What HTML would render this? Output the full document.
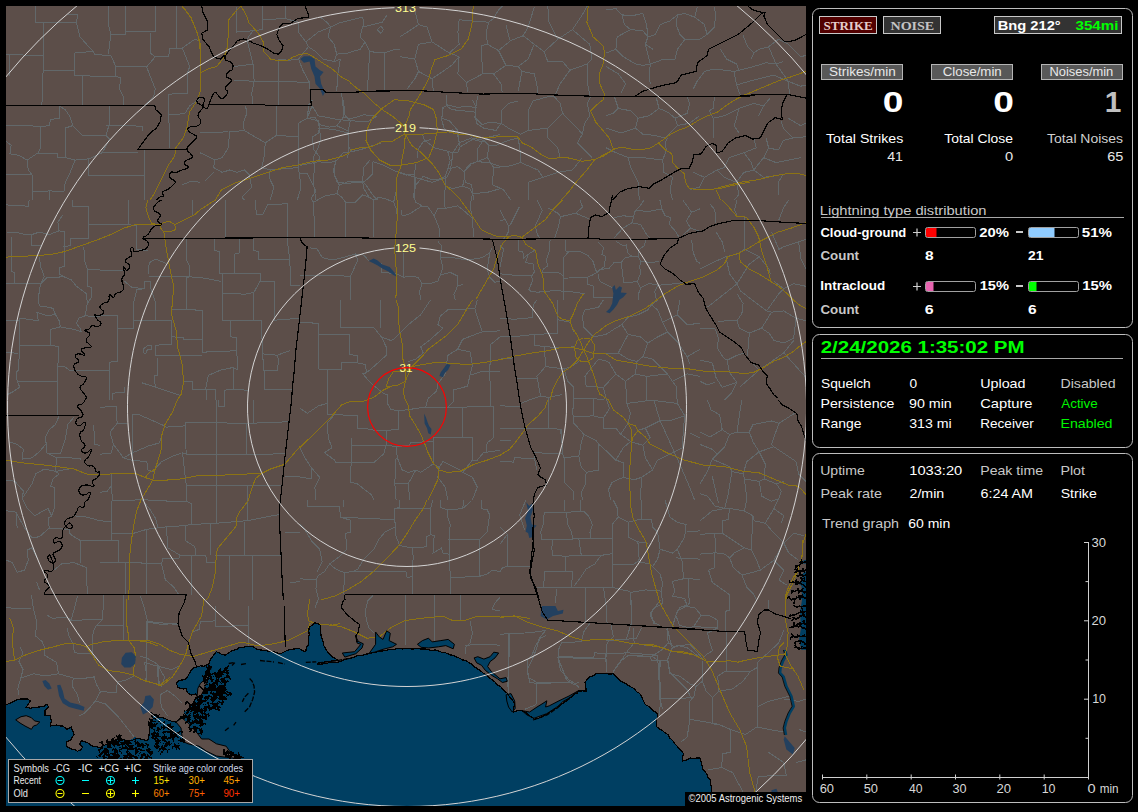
<!DOCTYPE html>
<html><head><meta charset="utf-8"><title>Lightning</title>
<style>html,body{margin:0;padding:0;background:#000;overflow:hidden}svg{display:block}</style></head>
<body><svg width="1138" height="812" viewBox="0 0 1138 812">
<rect width="1138" height="812" fill="#000"/>
<defs><clipPath id="mc"><rect x="6" y="6" width="800" height="800"/></clipPath></defs>
<g clip-path="url(#mc)">
<rect x="6" y="6" width="800" height="800" fill="#5c4e49"/>
<path d="M340.6 300.0L340.6 327.6L373.9 327.6L381.3 336.9L391.1 340.6L393.6 339.4L401.0 332.0L408.4 324.6L420.7 314.8L428.1 303.7L430.5 300.0M380.0 300.0L380.0 327.6M300.0 322.2L318.5 323.4L318.5 369.0L327.1 369.5L327.1 414.5L334.5 414.5L357.1 415.8L357.1 428.1L371.4 429.3L373.9 430.5L386.2 430.5M318.5 334.5L349.3 334.5L349.3 354.7L357.1 355.4L357.1 362.8L365.3 364.5L366.5 372.7L362.8 373.9L371.4 383.7L383.7 393.6L387.4 394.8L387.4 403.4L391.1 409.6L398.5 410.8L398.5 429.3L386.2 430.5L386.2 445.3L396.1 446.6L397.3 457.6L402.2 470.0L408.4 472.4L415.8 470.0L420.7 472.4L428.1 467.5L433.0 463.8M327.1 369.5L341.9 369.5L341.9 362.8L357.1 362.8M300.0 408.4L307.4 413.3L318.5 405.9L327.1 403.4M351.7 437.9L351.7 445.3L386.2 445.3M351.7 445.3L350.5 482.3L356.7 483.5L371.4 494.6L373.9 500.0M334.5 414.5L327.1 423.2L328.3 437.9L332.0 447.8L324.6 452.7L334.5 460.1L335.7 462.6L350.5 462.6M350.5 462.6L373.9 462.6L383.7 453.9L386.2 445.3M311.1 467.5L319.7 477.3L314.8 487.2L316.0 500.0M300.0 477.3L311.1 478.6L311.1 467.5L304.9 457.6L300.0 447.8M396.1 446.6L409.6 445.3L410.8 442.4L433.0 441.6L433.0 437.9L472.4 437.9L472.4 460.1L477.3 460.1L483.5 452.7L500.0 450.2M433.0 441.6L433.0 463.8L439.2 467.5L442.9 461.3L450.2 465.0L460.1 470.0L462.6 472.4L472.4 460.1M396.1 457.6L394.8 483.5L396.1 500.0M394.8 483.5L408.4 483.5L415.8 470.0M462.6 407.1L462.6 437.9M425.6 407.1L447.8 407.1L462.6 407.1L493.3 406.4L493.3 437.9L487.2 442.9L486.0 452.7M425.6 407.1L428.1 398.5L436.7 391.1L437.9 383.7L445.3 373.9L447.8 355.4L457.6 349.3L462.6 339.4L474.9 334.5L482.3 332.0L500.0 330.8M398.5 410.8L408.4 409.6L425.6 407.1M447.8 407.1L453.9 401.0L453.9 389.9L467.5 386.2L470.0 375.1L482.3 371.4L500.0 371.9M489.7 371.9L490.9 406.4M381.3 336.9L386.2 346.8L386.2 355.4L373.9 366.5L366.5 372.7M420.7 346.8L430.5 339.4L442.9 328.3L437.9 324.6L440.4 316.0L447.8 309.9L474.9 308.6L477.3 300.0M420.7 346.8L423.2 353.0L415.8 359.1L408.4 361.6M482.3 332.0L477.3 317.2L474.9 308.6M457.6 349.3L470.0 351.7L472.4 365.3L470.0 375.1M500.0 336.9L490.9 344.3L489.7 371.9M408.4 483.5L409.6 500.0M462.6 472.4L472.4 477.3L477.3 487.2L472.4 500.0M439.2 467.5L437.9 477.3L445.3 487.2L447.8 500.0M186.2 239.4L186.2 259.1L189.9 266.5L189.9 276.8L186.2 277.6L186.2 309.6L202.2 310.3L202.2 352.2L236.7 350.7L237.9 370.0L233.0 367.5L220.7 370.0L208.4 375.4L205.9 387.2L206.4 400.0M214.5 239.4L214.5 250.5L219.5 251.7L219.5 273.9L222.4 273.9M239.2 239.4L239.2 253.0L234.2 254.2L234.2 273.4M253.9 239.4L253.9 250.5L258.9 251.7L258.9 259.1L289.7 259.1L290.9 285.0L300.0 285.0M287.2 239.4L289.7 259.1M222.4 273.9L260.1 273.4L260.1 281.3L253.9 292.4L253.9 320.2M222.4 273.9L222.4 320.2L253.9 320.2L261.3 320.2L262.6 353.9L277.3 355.2L289.7 350.7M222.4 293.6L245.3 294.1L253.9 292.4M260.1 281.3L274.9 281.8L274.4 320.2L300.0 318.2M149.3 276.8L189.9 276.8L205.9 278.3L220.7 281.3M171.4 309.6L186.2 309.6M148.0 273.9L149.3 262.8L155.4 259.1L161.6 261.6L166.5 263.5M144.3 281.3L150.5 281.3L150.5 287.4L155.4 302.2L155.4 320.2L133.3 320.7L133.3 303.4L136.9 289.9L144.3 288.7L144.3 281.3M117.2 328.1L133.3 328.1L133.3 320.7M100.0 315.8L117.2 315.8L117.2 361.3L109.9 362.1L109.9 400.0M155.4 320.2L171.4 320.7L171.4 336.7L183.7 337.9L183.7 339.9L202.2 339.9M155.4 345.3L171.4 344.1L171.4 336.7M155.4 345.3L155.4 355.7L202.2 355.7M157.9 357.6L157.9 374.9L154.2 376.1L155.4 387.2M141.9 382.8L181.3 395.8M183.7 381.0L192.4 381.0L192.4 389.7L215.8 389.7L215.8 400.0M100.0 370.0L109.9 370.0M124.6 387.2L124.6 392.1L112.3 393.3L112.3 400.0M236.7 350.7L236.7 337.9L230.5 336.7L230.5 320.7M233.0 367.5L233.0 389.7L247.8 390.1M233.0 389.7L224.4 390.1L224.4 400.0M262.6 353.9L263.8 370.0L277.3 370.0L278.6 360.1L277.3 355.2M264.5 370.0L264.5 389.7L292.1 389.7M100.0 270.2L123.4 270.2M128.3 200.0L128.3 224.6L136.9 225.9L136.9 249.3L148.0 250.5M100.0 224.6L128.3 224.6M192.4 200.0L192.4 214.8M225.6 200.0L225.6 236.9M255.2 200.0L256.4 214.8L262.6 214.8L267.5 204.9L287.2 203.7L287.2 239.4M124.6 281.3L132.0 287.4L144.3 288.7M143.1 349.0L148.0 345.3L151.7 345.3L151.7 349.0L146.8 350.2L145.6 353.9L143.1 352.7L143.1 349.0M307.4 118.5L314.8 117.2L319.7 124.6L318.5 133.3L312.3 136.9L313.5 149.3L319.7 156.7L318.5 161.6M307.4 118.5L308.6 104.9L312.3 100.0M319.7 124.6L329.6 127.1L336.9 125.9L343.1 117.2L344.3 107.4L343.1 100.0M343.1 117.2L351.7 118.5L364.0 114.8L373.9 116.0M336.9 125.9L348.0 130.8L348.0 145.6L351.7 151.7L343.1 153.0L335.7 161.6L333.3 171.4L336.9 181.3L339.4 185.0L336.9 193.6L341.9 197.3L345.6 202.2L345.6 236.7M318.5 161.6L324.6 162.8L335.7 161.6M300.0 165.3L307.4 164.0L318.5 161.6M300.0 173.9L307.4 173.9L311.1 181.3L316.0 191.1L311.1 198.5L313.5 202.2L314.8 236.7M313.5 202.2L324.6 196.1L336.9 193.6M372.7 161.6L372.7 173.9L367.7 178.8L362.8 182.5L364.0 188.7L369.0 197.3L373.9 199.8L373.9 236.7M369.0 197.3L362.8 194.8L355.4 202.2L345.6 202.2M339.4 185.0L349.3 181.3L362.8 182.5M351.7 151.7L361.6 149.3L372.7 145.6L381.3 143.1M372.7 161.6L383.7 165.3L396.1 171.4L405.9 175.1L414.5 173.9L415.8 164.0M373.9 199.8L378.8 197.3L385.0 198.5L393.6 202.2L396.1 208.4L397.3 215.8M393.6 202.2L394.8 197.3L396.1 191.1M414.5 173.9L415.8 185.0L413.3 196.1L415.8 202.2L421.9 205.9L428.1 207.1L434.2 215.8L439.2 228.1L439.2 236.7M401.0 209.6L402.2 215.8L408.4 214.5L418.2 208.4L421.9 205.9M415.8 185.0L423.2 176.4L433.0 180.0L440.4 178.8L445.3 176.4M445.3 176.4L445.3 186.2L444.1 201.0L445.3 208.4L437.9 208.4L434.2 215.8M445.3 208.4L457.6 205.9L462.6 209.6L472.4 218.2L473.6 236.7M445.3 186.2L452.7 188.7L462.6 186.2L470.0 188.7L472.4 193.6L470.0 205.9L472.4 218.2M472.4 193.6L487.2 192.4L500.0 188.7M462.6 186.2L465.0 176.4L463.8 171.4L470.0 164.0L477.3 161.6L489.7 162.8L500.0 166.5M445.3 176.4L447.8 169.0L457.6 166.5L463.8 171.4M447.8 169.0L450.2 160.3L447.8 151.7L457.6 153.0L460.1 146.8L472.4 139.4L482.3 141.9M460.1 146.8L457.6 134.5L452.7 129.6L447.8 132.0M477.3 161.6L477.3 149.3L482.3 141.9L489.7 136.9L500.0 134.5M472.4 100.0L476.1 107.4L474.9 117.2L482.3 124.6L489.7 122.2L500.0 123.4M442.9 107.4L447.8 104.9L457.6 107.4L467.5 106.2L474.9 107.4M442.9 107.4L441.6 119.7L444.1 128.3L447.8 132.0M417.0 157.9L418.2 149.3L423.2 141.9L430.5 139.4M309.9 247.8L317.2 249.0L322.2 257.6L332.0 260.1L343.1 257.6L355.4 253.9L364.0 255.2L369.0 261.3M355.4 253.9L357.9 260.1L350.5 276.1L350.5 300.0M300.0 275.4L350.5 276.1M381.3 262.6L381.3 272.4L396.1 273.6L403.4 277.3L410.8 276.1L418.2 277.3L421.9 283.5L430.5 283.5L437.9 281.0L440.4 274.9L450.2 272.4L457.6 276.1L457.6 286.0L462.6 284.7M403.4 252.7L403.4 277.3M421.9 283.5L419.5 292.1L420.7 300.0M437.9 241.6L441.6 245.3L440.4 257.6L442.9 267.5L440.4 274.9M440.4 257.6L452.7 257.6L467.5 260.1L482.3 257.6L489.7 252.7L492.1 247.8M457.6 286.0L453.9 294.6L455.2 300.0M489.7 252.7L487.2 270.0L489.7 277.3L494.6 282.3L500.0 281.0M500.0 318.5L514.8 319.2L532.0 317.7L533.3 304.9L536.9 300.0M500.0 336.9L514.8 336.5L534.5 334.5L534.5 345.6L544.3 346.3L545.6 366.5L536.9 376.4L540.6 396.1L529.6 399.8L520.9 403.4M500.0 359.1L513.5 357.9M517.2 378.3L536.9 378.8M500.0 405.9L520.9 406.4M500.0 428.1L524.6 428.1L548.0 428.1L560.3 429.3L561.6 437.9M548.0 397.3L548.0 428.1M540.6 396.1L548.0 397.3L561.6 394.8M500.0 440.4L511.1 440.9M500.0 461.3L513.5 462.1L514.8 457.6L534.5 458.9L534.5 452.7L562.8 453.9L564.0 457.6L578.8 456.4L581.3 467.5L586.2 472.4L598.5 470.0M534.5 458.9L536.9 470.0M562.8 453.9L561.6 437.9L561.6 429.3M564.0 457.6L564.5 482.3L573.9 492.1L573.9 500.0M557.9 300.0L557.9 319.7L570.2 322.2L573.9 332.0M534.5 334.5L557.9 333.3L557.9 319.7M544.3 346.3L559.1 348.0L573.9 346.8M545.6 366.5L564.0 369.0L571.4 366.5L578.8 361.6M564.0 369.0L567.7 381.3L573.9 387.4L573.9 398.5L572.7 412.1L573.9 423.2L583.7 434.2L596.1 440.4L598.5 444.1L598.5 470.0M573.9 398.5L593.6 398.5L603.4 399.8L605.9 397.3M593.6 398.5L593.1 415.8L573.9 417.0M593.1 415.8L603.4 418.2L603.4 428.1L615.8 428.1L620.7 434.2L630.5 441.6M583.7 434.2L581.3 442.9L578.8 456.4M605.9 397.3L609.6 408.4L603.4 418.2M586.2 386.2L585.0 376.4L588.7 371.4L598.5 359.1L608.4 361.6M586.2 386.2L603.4 387.4L605.9 397.3M603.4 387.4L615.8 373.9L608.4 361.6M615.8 373.9L625.6 381.3L626.8 403.4L645.3 401.0L653.9 400.5M626.8 403.4L630.5 413.3L628.1 423.2L620.7 434.2M653.9 400.5L660.1 420.7L645.3 428.1L637.9 430.5M653.9 400.5L677.3 403.4L684.7 415.8L670.0 420.7L660.1 420.7M646.6 376.4L646.6 400.5M625.6 381.3L635.5 373.9L646.6 376.4L667.5 373.9L672.4 381.3L676.1 386.2L677.3 403.4M635.5 373.9L636.7 361.6L628.1 359.1L618.2 353.0L605.9 353.0M618.2 353.0L628.1 334.5L621.9 324.6L613.3 329.6L605.9 334.5L593.6 336.9M628.1 334.5L640.4 336.9L647.8 343.1L642.9 356.7L636.7 361.6M647.8 343.1L657.6 336.9L667.5 332.0L662.6 322.2L657.6 309.9L651.5 304.9M621.9 324.6L628.1 317.2L637.9 314.8L647.8 309.9L651.5 304.9L657.6 300.0M667.5 332.0L677.3 341.9L687.2 356.7L689.7 364.0M642.9 356.7L652.7 359.1L667.5 373.9M672.4 381.3L687.2 373.9L700.0 376.4M687.2 356.7L700.0 349.3M677.3 314.8L687.2 324.6L700.0 323.4M679.8 300.0L677.3 314.8L662.6 322.2M582.5 316.0L585.0 309.9L598.5 307.4L603.4 300.0M582.5 316.0L583.7 327.1L593.6 336.9M598.5 444.1L608.4 452.7L615.8 460.1L623.2 462.6L623.2 477.3L612.1 482.3L608.4 489.7L610.8 500.0M630.5 441.6L623.2 447.8L615.8 460.1M630.5 441.6L642.9 445.3L645.3 457.6L652.7 470.0L657.6 460.1L670.0 453.9L682.3 447.8M645.3 428.1L650.2 437.9L642.9 445.3M660.1 420.7L672.4 447.8L682.3 470.0L689.7 487.2L694.6 500.0M652.7 470.0L641.6 477.3L640.4 500.0M623.2 477.3L634.2 479.8L641.6 477.3M586.2 472.4L585.0 484.7L581.3 492.1L582.5 500.0M682.3 447.8L683.5 428.1L684.7 415.8M689.7 433.0L700.0 437.9M307.4 500.0L307.4 506.2L339.4 506.9L340.6 517.2L350.5 520.2L350.5 532.0L345.6 533.3L346.8 549.3L339.4 556.7L329.6 564.0L324.6 571.4L317.2 576.4L316.0 588.7L318.5 598.5L314.8 608.4M340.6 517.2L394.8 519.7L394.8 508.6L399.8 507.4L399.8 500.0M343.1 500.0L343.1 506.9M394.8 508.6L430.5 508.6L433.0 500.0M430.5 508.6L430.5 534.5L426.8 536.9L426.8 546.8L412.1 548.0L413.3 556.7L412.1 571.4L412.1 594.3M394.8 519.7L396.1 536.9L399.8 545.6L412.1 548.0M394.8 527.1L385.0 532.0L378.8 539.4L373.9 549.3L364.0 559.1L357.9 569.0L353.0 571.4M344.3 572.7L353.0 571.4L405.9 571.4L407.1 577.6L412.1 576.4M344.3 572.7L343.8 594.3M329.6 564.0L335.7 569.0L344.3 572.7M300.0 578.8L316.0 580.0M300.0 524.6L304.9 529.6L312.3 541.9L319.7 549.3L322.2 561.6L317.2 571.4M447.8 509.9L447.8 517.2L450.2 524.6L449.0 539.4L450.2 576.4L450.2 594.3M449.0 539.4L479.8 539.4L487.2 532.0L489.7 514.8L487.2 509.9L481.0 508.6L481.0 500.0M430.5 534.5L434.2 535.7L433.0 553.0L441.6 548.0L442.9 553.0L449.0 554.2M479.8 539.4L479.3 576.4L450.2 577.6M479.3 576.4L487.2 573.9L492.1 570.2L500.0 571.4M440.4 500.0L440.4 507.4L447.8 509.9L462.6 508.6L463.8 500.0M462.6 508.6L471.2 501.2M405.4 594.3L405.4 645.3M434.2 594.3L434.2 644.1M460.6 594.3L460.6 619.5M500.0 597.3L494.6 603.4L492.1 609.6L500.0 610.8M373.9 594.3L367.7 601.0L365.3 610.8L366.5 620.7L369.0 628.1L373.9 633.0M470.0 620.7L472.4 633.0L470.0 642.9L465.0 647.8L465.0 653.9M465.0 645.3L487.2 644.1L500.0 645.3M185.0 422.2L247.8 423.4L289.7 421.7M185.0 422.2L186.2 454.2L216.3 454.7L246.6 454.7L284.7 453.7M216.3 400.0L216.3 454.7L216.3 485.0L216.3 523.2M246.6 423.4L247.0 454.7L247.0 485.0L247.0 520.7M186.2 485.0L216.3 485.0L247.0 485.0L282.3 485.0M186.2 454.2L182.5 453.0L186.2 485.0L186.2 501.0L191.1 503.4L191.6 524.4M112.3 500.5L144.3 499.8L166.5 501.0L186.2 501.0M111.1 533.0L134.5 533.0L146.8 529.3L166.5 526.8L185.0 525.6L191.6 524.4L210.8 523.6L216.3 523.2L247.0 520.7L272.4 515.8L279.8 514.5M111.1 500.5L111.1 533.0L111.1 540.4L118.5 540.4L118.5 562.6M100.0 540.4L111.1 540.4M100.0 562.6L118.5 562.6L146.8 563.1L161.6 563.8L162.8 558.9L178.8 558.9L180.0 555.2L205.9 555.2L206.4 562.6L214.5 562.6M146.8 529.3L146.8 563.1L146.8 594.6M166.5 526.8L167.7 547.8L180.0 555.2M185.0 525.6L185.0 540.4L194.8 546.6L196.1 555.2M210.8 523.6L210.3 555.2M244.1 521.9L244.1 555.2M214.5 555.2L244.1 555.2L281.0 555.2M191.6 555.2L191.6 594.6M229.3 555.2L229.3 600.0M252.7 555.2L252.7 600.0M125.9 563.1L125.9 594.6M161.6 563.8L165.3 579.8L173.9 587.2L178.8 594.6M141.9 499.8L149.3 508.4L155.4 518.2L157.9 526.8M100.0 407.4L116.0 406.2L117.2 423.4L127.1 423.4M117.2 423.4L109.9 432.0L113.5 444.3L111.1 453.0L100.0 454.2M113.5 444.3L123.4 457.9L132.0 460.3L146.8 461.6L148.0 470.2L153.0 471.4M132.0 460.3L132.0 414.8L139.4 414.8L161.6 424.6L166.5 427.1L185.0 425.9M123.4 457.9L132.0 453.0L149.3 445.6L159.1 443.1L161.6 436.9M153.0 471.4L161.6 461.6L171.4 456.7L181.3 453.0M100.0 520.7L111.1 521.9M111.1 473.9L112.3 500.5M100.0 492.4L107.4 491.1L111.1 486.2M284.7 533.0L300.0 532.5M284.7 476.8L300.0 476.8M289.7 582.3L300.0 581.8M218.2 400.0L218.2 406.2L224.4 406.2L224.4 400.0M253.9 400.0L253.9 423.4M35.7 6.2L35.7 22.2L76.4 22.7L77.6 14.8L67.7 14.8M43.1 22.7L43.1 70.2L41.9 105.4M6.2 54.7L43.1 55.4M9.9 54.7L9.9 76.4M43.1 70.2L74.6 70.2M74.6 52.5L74.6 75.1L82.5 75.9L82.5 105.4M74.6 52.5L93.6 51.7L94.8 54.7L110.8 55.4L115.8 66.5L115.8 76.4L82.5 75.9M76.4 22.7L80.0 36.9L89.9 48.0L93.6 51.7M108.4 6.2L108.4 24.6L110.8 34.5L108.4 54.2M110.8 34.5L125.6 34.5L125.6 6.2M125.6 31.5L155.2 32.0L155.2 6.2M115.8 66.5L146.6 67.0L155.2 56.7L150.2 53.0L150.2 33.3M115.8 76.4L120.7 77.6L119.5 88.7L123.2 96.1L123.2 105.4M146.6 67.0L155.2 88.7L153.9 96.1L145.3 105.4M155.2 56.7L168.7 56.2L170.0 48.0L182.3 48.0L189.7 66.5L187.2 73.9L187.2 93.6L168.7 94.1L168.7 114.5L170.0 147.8M176.1 6.2L176.1 48.0M182.3 48.0L194.6 39.4L200.0 40.6M168.7 114.5L184.7 113.8L189.7 105.9L200.0 98.5M59.1 105.9L59.1 118.2L50.5 119.5L49.3 125.6L40.6 126.8L40.6 147.8L38.2 152.7L27.1 160.1L28.3 170.0L32.0 174.9L32.0 192.1L49.3 190.9L64.0 191.6L65.3 182.3L70.2 172.4L75.1 160.1M6.2 125.6L24.6 125.1L40.6 126.8M59.1 105.9L65.3 109.6L70.2 117.0L72.7 125.6L82.5 135.5L105.9 135.5L109.6 123.2L109.6 105.9M65.3 128.1L65.3 157.6L57.9 157.6L57.9 153.9L38.2 153.9M65.3 157.6L75.1 160.1L88.7 158.9L102.2 152.7L137.9 152.2M105.9 135.5L109.6 139.2L102.2 152.7M105.9 125.6L142.9 126.1L142.9 130.5M72.7 125.6L65.3 128.1M144.1 150.2L144.1 175.4L144.1 200.0M88.7 158.9L88.7 175.4L144.1 175.4M6.2 141.6L11.1 145.3L9.9 153.9L18.5 155.2L27.1 160.1M6.2 174.4L32.0 174.9M32.0 192.1L32.0 200.0M49.3 190.9L49.3 200.0M182.3 184.7L192.1 181.0L200.0 182.3M262.8 6.2L262.8 19.7L285.0 18.5L285.0 6.2M236.9 7.4L236.9 32.0L253.0 30.8L262.8 29.6L262.8 19.7M253.0 30.8L246.8 39.4L253.0 64.0L234.5 66.5L232.0 65.3M253.0 64.0L254.2 81.3L233.3 80.0M254.2 81.3L251.7 93.6L253.0 104.7M278.8 59.1L278.8 81.3L278.8 104.7M254.2 81.3L278.8 81.3L309.6 82.5L309.6 88.7M285.0 18.5L298.5 22.2L298.5 32.0L305.9 41.9L308.4 46.8L298.5 59.1L303.4 71.4L309.6 82.5M278.8 59.1L288.7 60.3L298.5 59.1M308.4 46.8L315.8 51.7L323.2 59.1L334.2 61.6L340.4 59.1M305.9 41.9L318.2 32.0L330.5 27.1L337.9 23.4L362.6 17.2M330.5 27.1L328.1 36.9L334.2 44.3L336.7 54.2L334.2 61.6M340.4 59.1L337.9 73.9L336.7 91.1M336.7 54.2L347.8 53.0L360.1 49.3L365.0 41.9L360.1 36.9L362.6 27.1L372.4 24.6L382.3 22.2L387.2 14.8M362.6 17.2L363.8 23.4L362.6 27.1M320.7 17.2L328.1 23.4L330.5 27.1M365.0 41.9L370.0 51.7L368.7 66.5L367.5 91.1M370.0 51.7L384.7 53.0L394.6 49.3L400.0 49.3M384.7 53.0L384.2 91.1M377.3 29.6L381.0 25.9L383.5 29.6L381.0 33.3L377.3 29.6M245.6 105.9L246.8 113.3L243.1 123.2L244.3 130.5L229.6 131.8L228.3 147.8L222.2 157.6L214.8 160.1L213.5 167.5L222.2 172.4L229.6 170.0L236.9 172.4L244.3 170.0L249.3 174.9M244.3 130.5L265.3 142.9L264.0 157.6L261.6 167.5L270.2 170.0L269.0 177.3L273.9 187.2L270.2 200.0M276.4 105.9L276.4 135.5L265.3 142.9M276.4 135.5L298.5 136.7L298.5 123.2L307.1 118.2L312.1 105.9M307.1 118.2L318.2 120.7L320.7 137.9L318.2 147.8L313.3 157.6L314.5 167.5L313.3 182.3L315.8 200.0M298.5 136.7L298.5 167.5L270.2 170.0M298.5 167.5L301.0 187.2L297.3 200.0M312.1 105.9L318.2 115.8L337.9 119.5L350.2 120.7M341.6 92.4L342.9 105.9L345.3 115.8L350.2 120.7L347.8 133.0L349.0 145.3L347.8 157.6M318.2 128.1L333.0 129.3L347.8 133.0M350.2 120.7L367.5 121.9L377.3 115.8M335.5 160.1L334.2 174.9L337.9 182.3L347.8 183.5L362.6 181.0L367.5 187.2L372.4 194.6L377.3 200.0M200.0 133.0L228.3 131.8M200.0 152.7L209.9 157.6L214.8 160.1M249.3 174.9L251.7 187.2L241.9 197.0L244.3 200.0M204.9 181.0L213.5 172.4M362.6 181.0L363.8 167.5L370.0 160.1M414.8 9.9L418.5 24.6L427.1 27.1L432.0 41.9L449.3 53.0L459.1 56.7M418.5 24.6L407.4 32.0L400.0 36.9M400.0 56.7L414.8 59.1L418.5 71.4L414.8 78.8L407.4 88.7M432.0 41.9L418.5 44.3L414.8 59.1M459.1 19.7L457.9 32.0L459.1 44.3L449.3 53.0M459.1 19.7L471.4 20.9L488.7 22.2L486.2 32.0L487.4 44.3L481.3 45.6L482.5 73.9L466.5 82.5M487.4 44.3L498.5 50.5L505.9 65.3L518.2 66.5L521.9 71.4L518.2 91.1M488.7 22.2L493.6 18.5L498.5 9.9L502.2 6.2M498.5 50.5L510.8 40.6L523.2 35.7L534.2 44.3L528.1 59.1L518.2 66.5M505.9 24.6L509.6 39.4L510.8 40.6M534.2 44.3L544.1 51.7L547.8 61.6L562.6 61.6L570.0 70.2L560.1 83.7L555.2 94.8M521.9 71.4L534.2 73.9L536.7 83.7L537.9 93.6M493.6 73.9L501.0 83.7L502.2 92.4M482.5 73.9L493.6 73.9L505.9 65.3M459.1 56.7L457.9 73.9L466.5 82.5L467.7 92.4M418.5 71.4L432.0 78.8L433.3 91.1M432.0 78.8L451.7 65.3L459.1 56.7M544.1 51.7L557.6 39.4L572.4 29.6L582.3 14.8L587.2 6.2M572.4 29.6L589.7 44.3L592.1 59.1L587.2 64.0L587.2 81.3L589.7 94.8M547.8 6.2L549.0 22.2L557.6 39.4M570.0 70.2L587.2 64.0M523.2 35.7L528.1 27.1L534.2 7.4M446.8 94.8L446.8 105.9L451.7 109.6L475.1 112.1L477.6 96.1M475.1 112.1L476.4 123.2L483.7 128.1L496.1 130.5L501.0 123.2L501.0 110.8L508.4 103.4L518.2 101.0M501.0 123.2L508.4 128.1L520.7 134.2L528.1 130.5L528.1 110.8L533.0 101.0L545.3 97.3L553.9 96.1M528.1 130.5L547.8 128.1L557.6 118.2L562.6 113.3L560.1 103.4L553.9 96.1M562.6 113.3L577.3 128.1L582.3 134.2L584.7 123.2L589.7 115.8L587.2 103.4L590.9 96.1M443.1 108.4L441.9 118.2L449.3 120.7L457.9 130.5L459.1 142.9L453.0 152.7L450.5 170.0L446.8 177.3M459.1 142.9L471.4 137.9L483.7 140.4L488.7 145.3L496.1 145.3L508.4 140.4L518.2 137.9M488.7 145.3L487.4 157.6L471.4 163.8L464.0 172.4L465.3 182.3L471.4 184.7L473.9 200.0M487.4 157.6L493.6 167.5L508.4 166.3L520.7 162.6L520.7 155.2L518.2 137.9M493.6 167.5L492.4 184.7L503.4 189.7L510.8 200.0M520.7 162.6L537.9 170.0L542.9 177.3L528.1 182.3L528.1 200.0M542.9 177.3L557.6 172.4L572.4 170.0L582.3 157.6M582.3 134.2L577.3 142.9L587.2 152.7L592.1 157.6M453.0 152.7L434.5 147.8L424.6 140.4L422.2 134.2M414.8 177.3L432.0 182.3L446.8 177.3M400.0 172.4L414.8 177.3L414.8 200.0M547.8 128.1L547.8 137.9L557.6 147.8L560.1 157.6M606.0 9.9L615.9 8.6L622.0 14.8L630.6 16.0L642.9 13.5M622.0 14.8L624.5 24.6L630.6 29.6L617.1 36.9L615.9 49.3L623.2 56.7M630.6 29.6L642.9 30.8L647.9 36.9L645.4 44.3L652.8 49.3M642.9 13.5L646.6 24.6L647.9 36.9M660.2 24.6L670.0 20.9L677.4 14.8L684.8 13.5L694.7 17.2L704.5 24.6L707.0 34.5M677.4 14.8L676.2 24.6L679.9 34.5L684.8 39.4L677.4 49.3L675.0 59.1M660.2 24.6L655.3 34.5L647.9 36.9M645.4 44.3L650.3 64.0L649.1 76.4L650.3 83.7M675.0 59.1L663.9 59.1L650.3 64.0M623.2 56.7L635.6 64.0L642.9 65.3L650.3 64.0M606.0 66.5L618.3 73.9L625.7 83.7L620.8 93.6M615.9 49.3L606.0 53.0M684.8 39.4L699.6 39.4L707.0 34.5L714.4 27.1L715.6 14.8L714.4 7.4M694.7 17.2L697.1 7.4M720.5 49.3L726.7 59.1L736.5 64.0L739.0 70.2L734.1 71.4L736.5 85.0L740.2 94.8M739.0 70.2L753.8 66.5L766.1 62.8L776.0 64.0L783.3 61.6M742.7 34.5L747.6 46.8L753.8 53.0L758.7 49.3L768.6 46.8L776.0 64.0L788.3 81.3L789.5 93.6M753.8 53.0L751.3 59.1M768.6 46.8L778.4 39.4L788.3 44.3L800.6 56.7L806.0 55.4M736.5 85.0L753.8 80.0L773.5 75.1L788.3 81.3M704.5 71.4L714.4 69.0L734.1 71.4M704.5 71.4L697.1 81.3L693.4 88.7M788.3 81.3L800.6 86.2L806.0 85.0M614.6 97.3L618.3 108.4L613.4 113.3L606.0 115.8M618.3 108.4L630.6 110.8L638.0 118.2L649.1 115.8L659.0 108.4L656.5 98.5M638.0 118.2L635.6 128.1L620.8 133.0L613.4 130.5L606.0 128.1M635.6 128.1L642.9 134.2L655.3 135.5L665.1 137.9L670.0 133.0L677.4 125.6M659.0 108.4L667.6 112.1L675.0 118.2L677.4 125.6L689.7 123.2L699.6 115.8M687.3 97.3L689.7 103.4L687.3 113.3L675.0 118.2M714.4 97.3L713.1 108.4L709.4 110.8L713.1 118.2L713.1 137.9M713.1 118.2L724.2 115.8L734.1 110.8L739.0 108.4M739.0 108.4L736.5 118.2L734.1 125.6L739.0 133.0M739.0 108.4L753.8 103.4L763.6 105.9L769.8 98.5M758.7 115.8L763.6 105.9M606.0 147.8L615.9 152.7L628.2 157.6L630.6 167.5L638.0 182.3L639.3 200.0M628.2 157.6L642.9 157.6L662.7 160.1L666.3 150.2M666.3 150.2L665.1 142.9L667.6 137.9M662.7 160.1L663.9 172.4L672.5 177.3L670.0 189.7L672.5 200.0M693.4 172.4L704.5 177.3L716.8 170.0L724.2 167.5L729.2 157.6M716.8 170.0L724.2 177.3L736.5 182.3L743.9 172.4L753.8 170.0L763.6 157.6L768.6 147.8L778.4 150.2M729.2 157.6L743.9 152.7L756.2 147.8L753.8 137.9M743.9 152.7L751.3 162.6L753.8 170.0M763.6 157.6L776.0 162.6L788.3 160.1L800.6 157.6M778.4 150.2L783.3 140.4L793.2 137.9L806.0 136.7M768.6 147.8L766.1 137.9M736.5 182.3L739.0 194.6L734.1 200.0M753.8 170.0L763.6 177.3L773.5 176.1M778.4 194.6L778.4 182.3L783.3 173.6M704.5 177.3L699.6 187.2L689.7 189.7M793.2 137.9L783.3 128.1L780.9 120.7M788.3 118.2L800.6 125.6L806.0 123.2M6.2 204.9L28.3 206.2L29.1 200.0M72.7 200.0L72.7 206.2L88.2 206.9L88.2 224.6L100.0 224.6M88.2 224.6L88.2 238.2L70.2 238.9L70.2 245.6L64.0 246.8L64.5 232.0L59.1 230.8L57.9 222.2L62.8 214.8M7.4 232.0L14.8 232.0L24.6 234.5L32.0 234.5L39.4 232.0L49.3 234.5L59.1 230.8M11.1 236.9L11.1 271.4L14.8 272.7L14.8 283.3M32.0 234.5L31.5 245.6L40.6 245.6M6.2 283.3L14.8 283.3L40.6 283.7L46.8 277.6L64.0 276.8L71.4 280.0L76.4 286.2L86.2 293.6L87.4 303.4L85.0 315.8L78.8 318.2L76.4 323.2L80.0 328.1L81.3 331.8M39.4 256.7L40.6 266.5L44.3 276.4L40.6 283.7L38.2 298.5L39.4 305.9L48.0 307.1L53.0 308.4L55.4 314.5L59.1 320.7L60.3 326.8L66.5 328.1L73.9 329.3L81.3 331.8M64.5 246.8L64.5 266.5L59.1 267.7L59.1 273.9L64.0 276.8M83.7 246.8L85.0 261.6L87.4 269.0L100.0 269.0M87.4 269.0L87.4 286.2L91.1 287.4L91.6 297.3L87.4 303.4M36.9 312.1L38.2 320.7L19.7 318.2L19.7 345.3L50.5 345.3L50.5 329.3L60.3 326.8M6.2 320.7L19.7 320.2M50.5 345.3L58.6 346.6L57.9 366.3L57.9 400.0M19.7 345.3L18.5 370.0L16.0 372.4L17.2 381.0L57.9 381.8M57.9 366.3L65.3 367.0L69.0 370.0L100.0 370.0M6.2 352.7L18.5 353.2M17.2 381.0L19.7 387.2L12.3 392.1L7.4 394.6M36.9 312.1L46.8 315.8L55.4 314.5M85.0 315.8L100.0 317.0M57.9 400.0L57.9 414.8M59.1 416.0L55.4 424.6L49.3 429.6L45.6 436.9L46.8 453.0L60.3 453.7L65.3 439.4L67.7 424.6L73.9 417.2M9.9 441.9L17.2 444.3L23.4 449.3L22.2 459.1L32.0 457.9L39.4 451.7L45.6 444.3M46.8 453.0L56.7 457.9L55.4 471.4L59.1 473.9L53.0 478.8L50.5 486.2L54.2 487.4L54.2 508.4L51.7 515.8L48.0 508.4L45.6 509.6M55.4 471.4L44.3 469.0L35.7 473.9L32.0 483.7L27.1 491.1L22.2 498.5L27.1 508.4L34.5 515.8L45.6 509.6M6.2 480.0L14.8 481.3L23.4 491.1L22.2 498.5M6.2 510.8L16.0 512.1L24.6 528.1L32.0 537.9L39.4 536.7L49.3 528.1L48.0 518.2L51.7 515.8M16.0 512.1L17.2 528.1M49.3 528.1L69.0 529.3L70.2 534.2L80.0 540.4L100.0 540.9M80.0 540.4L80.0 562.6M6.2 560.1L12.3 562.6L17.2 572.4L24.6 570.0L28.3 560.1L27.1 550.2L32.0 547.8L36.9 557.6M54.2 570.0L61.6 563.8L73.9 562.6L86.2 567.5L87.4 594.6M36.9 582.3L39.4 589.7M93.6 424.6L94.8 444.3L100.0 445.6M73.9 515.8L86.2 517.0L100.0 520.7M56.7 457.9L71.4 457.9L81.3 459.1M55.4 471.4L69.0 469.0M500.0 210.5L508.8 226.4L507.9 233.4L503.5 239.0M519.3 207.0L510.5 224.6L508.8 226.4M536.9 200.0L542.2 210.5L535.1 226.4L537.8 235.1L540.4 239.0M547.5 207.9L558.0 213.2L560.6 216.7L558.0 228.1L554.5 239.0M560.6 216.7L575.6 213.2L582.6 207.0L580.0 200.0M575.6 213.2L586.1 217.6L589.6 219.3M518.5 240.1L518.5 251.0L522.8 251.8L523.7 258.0L528.1 254.5L533.4 251.0L536.0 250.1M528.1 254.5L525.5 262.4L533.4 264.1L534.3 272.1L531.6 275.6L532.5 280.8L529.0 289.6L530.8 291.4L537.8 292.3L543.1 291.4M500.0 273.8L514.1 275.2L532.5 275.9M550.1 240.1L549.2 251.0L546.6 259.8L547.5 265.9L543.1 269.4L542.2 272.9L558.0 272.4L563.3 275.6M565.0 240.1L565.9 251.0L568.5 251.8L563.3 258.0L563.6 277.3L563.6 291.4L563.3 300.0M568.5 251.8L580.8 251.8L587.9 255.4L593.1 261.5L595.8 270.3L597.5 272.1L591.4 275.6L587.0 277.3L563.6 278.2M587.0 277.3L587.9 284.4L593.1 286.1L594.0 297.5L612.5 297.5M597.5 272.1L600.2 269.4L609.0 268.5L614.2 262.4L621.3 262.4L624.8 258.0L631.8 256.2L638.8 257.1L640.6 261.5M621.3 262.4L622.1 270.3L623.0 277.3L623.9 282.6L637.1 281.7L640.6 273.8L639.7 266.8L640.6 261.5M598.4 273.8L599.3 280.8L605.4 284.4L612.5 287.9M598.4 242.2L603.7 247.5L601.9 254.5L605.4 256.2L604.6 266.8L600.2 269.4M616.0 241.3L623.0 245.7L626.5 244.8L627.4 252.7L631.8 256.2M645.9 240.4L644.1 245.7L638.8 250.1L638.8 257.1M640.6 261.5L651.1 262.4L659.1 261.5M637.1 281.7L640.6 287.9L638.8 293.1L638.8 300.0M640.6 287.9L649.4 283.5L658.2 285.2L668.7 284.4L682.8 282.6M658.2 285.2L654.7 291.4L656.4 300.0M500.0 245.7L503.5 249.2L501.8 258.0L500.0 266.8M543.1 291.4L558.0 290.5L563.6 291.4L577.3 292.3L584.4 294.0M614.2 217.6L623.0 215.8L633.6 216.7L635.3 210.5L640.6 205.3L644.1 200.0M633.6 216.7L631.8 222.8L623.0 228.1L614.2 237.8M631.8 222.8L640.6 224.6L645.9 233.4L649.4 237.8M635.3 210.5L649.4 211.4L661.7 208.8L659.9 200.0M661.7 208.8L665.2 215.8L670.5 217.6L669.6 224.6L675.7 231.6L679.3 237.8M682.8 200.0L691.6 212.3L686.3 221.1L690.7 228.1L682.8 235.1M691.6 212.3L700.0 208.8M690.7 228.1L700.0 231.6M691.6 240.4L693.3 252.7L696.8 261.5L700.0 263.3M500.0 221.1L505.3 219.3M709.9 203.7L714.8 209.9L716.0 223.4M744.4 217.3L744.4 249.3L737.0 254.2M778.9 219.7L783.8 207.4L788.7 200.0M737.0 200.0L734.5 209.9L737.0 214.8M716.0 232.0L722.2 241.9L724.6 251.8M700.0 269.0L714.8 261.6L725.9 256.7L737.0 254.2M725.9 256.7L729.6 273.9L737.0 283.8L724.6 293.7L707.4 307.2M737.0 283.8L749.3 264.1L759.2 256.7L744.4 249.3M759.2 256.7L769.0 269.0L770.2 273.9M737.0 283.8L740.7 291.2L766.6 310.9L771.5 312.2L783.8 310.9L796.1 318.3L806.0 320.8M766.6 310.9L778.9 293.7L783.8 288.7L773.9 281.3M783.8 288.7L793.7 283.8L806.0 286.3M771.5 312.2L761.6 328.2L749.3 333.1L748.1 347.9L746.8 357.8L759.2 370.1M761.6 328.2L769.0 333.1L773.9 340.5L783.8 343.0L793.7 338.0L796.1 318.3M737.0 293.7L743.1 303.5L741.9 313.4L737.0 320.8L739.4 328.2L749.3 333.1M737.0 320.8L724.6 320.8L718.5 322.0M771.5 232.0L778.9 249.3L783.8 246.8L798.6 241.9L806.0 239.4M798.6 241.9L801.1 259.2L806.0 269.0M700.0 328.2L714.8 328.2L718.5 338.0L717.3 347.9L723.4 357.8L727.1 360.2L737.0 355.3L744.4 352.8M727.1 360.2L729.6 372.5L737.0 382.4L732.0 392.3L724.6 400.1M712.3 362.7L716.0 377.5L722.2 387.3L737.0 382.4M700.0 360.2L712.3 362.7M700.0 381.2L707.4 384.9L714.8 382.4M759.2 370.1L783.8 352.8L793.7 340.5M783.8 352.8L806.0 377.5M739.4 387.3L759.2 370.1M707.4 400.0L711.1 409.9L719.7 414.8L722.2 429.6L729.6 434.5L724.6 446.8L717.3 454.2L712.3 459.2M741.9 400.0L739.4 414.8L737.0 432.0L729.6 434.5M737.0 432.0L749.3 432.0L753.0 424.6L771.5 421.0L778.9 423.4L796.1 412.3M749.3 432.0L753.0 441.9L759.2 451.8L746.8 461.6L743.1 473.9L744.4 478.9M759.2 451.8L773.9 446.8L788.7 456.7L796.1 461.6M778.9 423.4L771.5 444.4L773.9 446.8M700.0 432.0L709.9 437.0L722.2 429.6M700.0 444.4L712.3 449.3L717.3 454.2M712.3 459.2L707.4 471.5L700.0 483.8M712.3 459.2L729.6 466.6L732.0 471.5L743.1 473.9M732.0 471.5L728.3 493.7L724.6 508.5L714.8 506.0L707.4 496.1L700.0 493.7M712.3 476.4L718.5 503.5M744.4 478.9L746.8 498.6L744.4 510.9L729.6 508.5L724.6 508.5M744.4 478.9L759.2 481.3L764.1 478.9L765.3 464.1L759.2 451.8M759.2 481.3L761.6 496.1L771.5 501.1L778.9 498.6L781.3 491.2L776.4 483.8L783.8 481.3M764.1 478.9L776.4 483.8M700.0 520.8L712.3 510.9L724.6 508.5M729.6 508.5L728.3 519.5L722.2 520.8L722.2 533.1L700.0 534.3M729.6 508.5L744.4 510.9L753.0 515.8L754.2 520.8L765.3 523.2L773.9 533.1L783.8 543.0L788.7 552.8L798.6 560.2M753.0 515.8L751.8 538.0L751.8 550.4L756.7 560.2L760.4 570.1L751.8 572.5L741.9 575.0L733.3 567.6L729.6 557.8L734.5 552.8L744.4 547.9L751.8 550.4M722.2 533.1L737.0 543.0L744.4 547.9M714.8 534.3L716.0 552.8L700.0 554.1M716.0 552.8L724.6 554.1L729.6 557.8M714.8 552.8L714.8 567.6L708.6 570.1L712.3 582.4L729.6 594.7L729.6 600.1M765.3 523.2L773.9 508.5L778.9 498.6M773.9 508.5L783.8 515.8L781.3 523.2M783.8 543.0L793.7 533.1L803.5 535.6M760.4 570.1L773.9 560.2L783.8 543.0M741.9 575.0L746.8 587.3L753.0 593.5L756.7 600.1M773.9 560.2L783.8 570.1L778.9 579.9L786.3 584.9M796.1 461.6L798.6 473.9L806.0 481.3M544.3 512.3L543.1 524.6L540.6 532.0L541.9 539.4L553.0 539.4L578.8 538.9L612.1 538.2M544.3 512.3L566.5 512.3L583.7 511.1L588.7 516.0L592.4 524.6L589.9 532.0L591.1 538.2M566.5 512.3L567.7 524.6L571.4 532.0L572.7 538.9M564.0 500.0L564.0 511.1M580.0 500.0L580.0 511.1M553.0 539.4L551.7 548.0L553.0 555.4L565.3 556.2L565.3 571.4L572.7 571.9L571.4 587.4M578.8 538.9L581.3 555.4L565.3 556.2M581.3 555.4L601.0 555.4L612.1 553.7M612.1 538.2L612.1 553.7L612.1 564.0L612.1 587.4M601.0 555.4L594.8 564.0L586.2 569.0L581.3 576.4L573.9 586.2M544.3 571.9L565.3 571.4M544.3 571.9L543.8 587.4M536.9 587.4L571.4 587.4L585.0 587.4L603.4 587.4L612.1 587.4L628.1 591.1L630.5 592.4M556.7 588.7L555.4 603.4M585.0 587.4L585.0 621.9M603.4 587.4L605.9 603.4L607.1 623.2M630.5 592.4L631.8 625.6M612.1 564.0L633.0 564.5L637.9 561.6M618.2 517.2L612.1 524.6L612.1 538.2M618.2 517.2L628.1 522.2L637.9 519.7L651.5 519.7L652.7 527.1L657.6 532.0M613.3 500.0L617.0 507.4L618.2 517.2M628.1 522.2L628.1 536.9L637.9 541.9L639.2 559.1L637.9 561.6L650.2 564.0M641.6 500.0L641.6 519.7M637.9 541.9L647.8 543.1M657.6 532.0L660.1 549.3L672.4 553.0L677.3 549.3L684.7 536.9L686.0 524.6L677.3 522.2L670.0 517.2L665.0 500.0M660.1 549.3L657.6 559.1L652.7 566.5L650.2 564.0M652.7 566.5L660.1 573.9L662.6 583.7L661.3 591.1L645.3 589.9L630.5 592.4M677.3 549.3L682.3 561.6L683.5 578.8L672.4 581.3L674.9 591.1L672.4 596.1L684.7 598.5L687.2 605.9L677.3 610.8L672.4 626.8M683.5 578.8L688.4 578.8L689.2 603.4L687.2 605.9M688.4 578.8L700.0 579.3M687.2 532.0L700.0 530.8M676.1 557.9L700.0 559.1M661.3 591.1L662.6 603.4L653.9 608.4L650.2 615.8L655.2 623.2L660.1 625.6M500.0 544.3L507.4 534.5L507.4 566.5L502.5 567.7L500.0 571.4M507.4 566.5L529.6 567.0M500.0 527.1L507.4 534.5M500.0 634.2L524.6 633.0L536.9 631.8L545.6 630.5M545.6 630.5L539.4 637.9L536.9 647.8L532.0 660.1L527.1 670.0L529.6 682.3L536.9 683.5L536.9 700.0M508.6 634.2L508.6 700.0M559.1 647.8L561.6 642.9L581.3 641.6L583.7 631.8L589.9 623.2M559.1 647.8L557.9 657.6L562.8 670.0L566.5 679.8L573.9 684.7L578.8 682.3M557.9 657.6L605.9 658.9L607.1 642.9L613.3 636.7L610.8 623.2M605.9 658.9L606.4 672.4M536.9 683.5L571.4 682.3M628.1 650.2L623.2 657.6L615.8 667.5L613.3 672.4M628.1 650.2L634.2 642.9L633.0 628.1M628.1 655.2L650.2 656.4L651.5 660.1L667.5 660.1L670.0 652.7L672.4 647.8L677.3 645.3L687.2 647.8L700.0 657.6M660.1 660.1L659.6 700.0M667.5 660.1L670.0 672.4L679.8 682.3L687.2 689.7L692.1 700.0M634.2 642.9L645.3 645.3L657.6 646.6M667.5 628.1L670.0 640.4L672.4 647.8M525.9 500.0L519.7 514.8L524.6 529.6M631.4 600.0L631.4 622.8M606.0 640.6L626.3 639.3L631.4 622.8M660.6 600.0L650.4 612.7L654.2 624.1M684.7 600.0L687.2 605.1L679.6 607.6L675.8 615.2L679.6 625.4L689.8 627.9L693.6 626.6L701.2 615.2L694.8 607.6L684.7 606.3M693.6 626.6L717.7 627.9L717.7 620.3L708.8 615.2L701.2 615.2M729.1 600.0L729.1 610.2L725.3 611.4L725.3 630.5M768.4 600.0L768.4 610.2M717.7 627.9L707.5 633.0L710.1 643.1L712.6 650.8L706.3 654.6L702.4 658.4M666.9 629.2L668.2 643.1L674.5 647.0L679.6 645.7L689.8 644.4L694.8 649.5L702.4 658.4M641.5 627.9L636.5 638.1L626.3 639.3M613.6 671.1L621.2 660.9L627.6 655.8L651.7 656.3L659.3 660.9L660.6 699.0M651.7 656.3L660.6 650.8L668.2 643.1M668.2 660.9L669.5 673.6L679.6 676.1L689.8 683.8L696.1 686.3L693.6 697.7L660.6 699.0M696.1 686.3L702.4 681.2L702.4 660.9M702.4 681.2L706.3 691.4L712.6 697.7L718.9 691.4L717.7 676.1L725.3 671.1L750.7 671.1L757.8 667.3L757.8 662.2M726.6 630.5L726.6 671.1M750.7 671.1L743.1 681.2L732.9 688.8L718.9 691.4M757.8 667.3L757.8 706.6L757.0 726.9L745.6 734.5L730.4 729.4L718.9 724.4L712.6 723.9L712.6 697.7M718.9 724.4L705.0 721.8L689.8 719.3L687.2 737.1L680.9 742.1M689.8 719.3L689.8 701.5L693.6 697.7M660.6 699.0L659.3 716.8M757.8 706.6L768.4 701.5L783.7 697.7L788.7 696.4M730.4 729.4L730.9 752.3L722.8 753.6L721.5 767.5L707.5 770.1M721.5 767.5L732.9 772.6L738.0 782.7L743.1 791.6M757.0 726.9L768.4 729.4L783.7 732.0M768.4 752.3L783.7 762.4L786.2 775.1L758.3 776.4L755.7 791.6M783.7 699.0L798.9 701.5L806.0 699.0M798.9 729.4L806.0 732.0M796.4 762.4L806.0 759.9M757.8 662.2L778.6 643.1L783.7 630.5M31.4 595.2L33.5 608.8L36.6 621.4L35.6 636.1L41.9 641.3L45.0 648.6M6.3 607.8L31.4 608.8M47.1 615.1L52.4 618.3L67.0 617.2L71.2 620.4M71.2 620.4L77.5 596.3M71.2 620.4L102.6 619.3L103.7 595.2M102.6 619.3L96.3 625.6L93.2 631.9L92.1 642.4M96.3 625.6L123.6 625.2L123.6 595.2M123.6 625.2L124.0 640.3M140.3 596.3L144.5 608.8L147.6 621.4L147.6 640.3M147.6 621.4L178.0 624.6M45.0 648.6L44.0 654.9L56.5 662.3L58.6 673.8L73.3 678.0L79.6 679.0M19.9 646.5L23.0 652.8L18.8 661.2L23.0 669.6L20.9 678.0L17.8 688.4L18.8 694.7M20.9 678.0L33.5 673.8L45.0 675.9L58.6 673.8M79.6 679.0L94.2 676.9L96.3 684.2L100.5 691.6L95.3 701.0L90.1 707.3L83.8 713.6L79.6 715.7M100.5 691.6L116.2 692.6L117.3 682.1L125.7 680.1L134.0 675.9M73.3 678.0L72.3 686.3L77.5 694.7L79.6 703.1M95.3 701.0L105.8 704.1L117.3 715.7L125.7 726.1L134.0 736.6M144.5 662.3L150.8 664.3L158.1 666.4L159.2 684.2M144.5 662.3L146.6 673.8L145.5 682.1M158.1 666.4L171.7 669.6L180.1 665.4M160.2 694.7L167.5 690.5L175.9 696.8L182.2 703.1M160.2 694.7L161.3 707.3L167.5 715.7M92.1 642.4L92.1 654.9L95.3 659.1M67.0 627.7L69.1 636.1L73.3 644.5L74.3 652.8L90.1 653.9M215.1 606.0L215.1 626.9L248.4 625.2L248.9 649.1M248.4 606.0L248.4 625.2M147.4 622.0L162.2 624.5L176.9 623.2M193.0 631.9L199.1 629.4L200.3 622.0L215.1 620.8M146.2 620.8L146.2 679.9M140.0 656.5L146.2 657.7L157.2 663.9L164.6 677.4L160.9 687.3M157.2 663.9L158.5 684.8M509.9 633.1L508.6 667.6L507.4 687.3M536.9 682.4L536.5 704.5L524.6 709.4M536.9 682.4L573.9 682.8L578.8 687.3M557.9 656.5L560.3 670.0L569.0 679.9L573.9 682.8M557.9 656.5L593.6 657.7L594.8 652.8L605.9 654.0L606.4 672.5M605.9 654.0L628.1 652.8L657.6 655.3L660.1 699.6L662.6 709.4M527.1 660.2L532.0 655.3L535.7 645.4L540.6 638.0L545.6 635.6M527.1 660.2L528.3 677.4L536.9 682.4" stroke="#62686a" stroke-width="1" fill="none" shape-rendering="crispEdges"/>
<path d="M6.0 704.8L10.5 703.0L16.8 700.0L21.0 698.9L27.2 698.9L30.4 701.0L28.3 704.0L26.2 707.3L30.4 708.3L35.6 707.3L44.0 706.2L47.0 704.0L48.6 707.3L45.0 710.4L45.0 715.7L50.3 715.7L51.3 720.9L50.3 726.0L56.5 725.0L62.8 726.0L67.0 729.3L71.2 727.2L72.3 730.3L74.3 734.5L71.2 739.7L67.0 741.8L66.0 745.0L71.2 749.0L77.5 751.3L82.7 747.0L79.6 744.0L81.7 740.8L88.0 742.9L92.0 746.0L100.0 748.0L108.0 744.0L113.0 741.0L122.0 739.0L130.0 741.0L138.0 738.0L147.0 741.0L149.0 735.0L150.0 725.0L153.0 719.0L160.0 717.0L168.0 720.0L176.0 722.0L182.0 718.0L188.0 711.0L193.0 703.0L197.9 697.0L195.4 693.9L191.7 695.1L187.4 692.6L186.2 688.3L183.1 689.0L178.2 687.7L176.3 683.4L179.4 680.3L184.4 679.7L189.3 673.6L194.2 667.4L198.0 666.8L204.0 666.2L209.0 663.7L210.2 660.0L210.9 658.7L216.2 651.7L225.0 655.2L239.0 647.5L253.0 646.4L260.0 650.0L270.6 651.7L281.2 653.5L288.2 650.0L298.8 648.2L305.8 651.7L308.6 641.0L309.3 627.0L314.6 622.9L320.6 625.3L321.6 637.6L325.2 648.2L332.2 657.0L338.0 660.5L318.0 663.2L318.0 664.0L340.0 661.6L344.8 659.6L359.6 655.2L379.3 651.0L399.0 648.5L418.7 648.5L438.4 651.0L453.2 655.2L468.0 662.0L480.2 670.5L492.6 680.0L502.4 688.7L509.8 697.3L514.7 703.4L513.5 712.0L522.0 710.7L534.5 719.3L546.8 714.4L556.7 708.2L569.0 698.4L578.8 691.0L586.2 691.0L585.0 682.4L588.7 677.4L596.0 673.7L606.0 673.7L613.3 673.7L618.2 678.7L625.6 683.6L634.2 688.5L641.6 696.0L645.3 704.5L652.7 710.7L657.6 714.4L656.4 726.7L665.0 732.8L672.4 740.2L677.3 746.4L683.5 753.8L682.3 761.0L690.0 758.0L700.0 758.0L703.0 769.5L710.0 779.5L711.5 791.0L713.0 806.0L6.0 806.0Z" fill="#003f62" stroke="none"/>
<path d="M807.0 571.0L803.0 573.0L801.5 585.0L802.0 600.0L800.0 612.0L801.0 628.0L799.0 640.0L801.0 648.0L807.0 650.0Z" fill="#003f62"/>
<path d="M785.0 650.0L786.4 654.8L783.0 661.0L780.5 668.0L780.0 673.0L783.7 677.0L786.4 686.4L791.4 696.4L793.7 706.3L789.7 713.0L786.4 721.3L784.7 728.0L786.0 735.0" fill="none" stroke="#003f62" stroke-width="2.6" stroke-linejoin="round"/>
<path d="M783.4 650.0L784.8 654.8L781.4 661.0L778.9 668.0L778.4 673.0L782.1 677.0L784.8 686.4L789.8 696.4L792.1 706.3L788.1 713.0L784.8 721.3L783.1 728.0L784.4 735.0" fill="none" stroke="#000" stroke-width="0.8"/>
<path d="M396.1 300.0L398.5 307.4L398.5 319.7L399.8 332.0L402.2 344.3L402.2 356.7L404.7 365.3L405.9 373.9L405.4 381.3M472.4 300.0L465.0 312.3L457.6 324.6L447.8 334.5L437.9 341.9L428.1 349.3L421.9 356.7L415.8 362.8L412.1 366.5M412.1 366.5L423.2 364.5L437.9 362.1L452.7 363.5L467.5 364.5L482.3 362.8L500.0 359.6M412.1 366.5L408.4 373.9L405.4 381.3L398.5 385.0L391.1 386.2L383.7 389.9L373.9 397.3L364.0 401.0L351.7 401.0L341.9 404.7L332.0 415.8L319.7 428.1L309.9 437.9L300.0 447.3M412.1 366.5L408.4 370.2L398.5 371.4L393.6 371.4L388.7 378.8L386.2 386.2L391.1 386.2M405.4 381.3L403.4 391.1L404.7 398.5L408.4 405.9L409.6 415.8L415.8 425.6L420.7 434.2L424.4 442.9L428.1 452.7L433.0 462.6L439.2 470.0M439.2 470.0L447.8 472.4L460.1 471.2L472.4 465.0L487.2 460.1L500.0 455.2M439.2 470.0L437.9 479.8L433.0 489.7L428.1 500.0M182.3 6.2L190.9 17.2L197.0 32.0L199.0 40.6L200.0 49.3M182.0 6.2L190.6 17.2L196.8 32.0L200.5 44.3L200.5 91.1L196.8 101.0L189.4 112.1L186.9 128.1L183.3 137.9L175.9 147.8L174.6 156.4L168.5 165.0L161.1 179.8L153.7 194.6L150.0 200.0M241.1 6.2L235.0 12.3L228.8 19.7L228.3 32.0L227.6 46.8L223.9 57.9L216.5 66.5L207.9 69.0L200.5 72.7M241.1 6.2L247.3 17.2L248.5 22.2L258.4 33.3L263.3 41.9L263.8 51.7L270.7 59.1L278.1 60.8L287.9 60.3L292.9 57.1L300.2 54.2L307.6 53.7L313.8 57.1L322.4 62.8L332.3 69.0L342.1 77.6L350.0 81.3M215.3 200.0L221.4 189.7L233.7 183.5L253.4 177.3L268.2 172.4L283.0 167.5L297.8 165.0L312.6 161.3L327.3 160.1L342.1 156.4L350.0 152.7M473.2 6.2L471.9 24.6L468.2 39.4L460.8 49.3L448.5 55.4L435.0 59.6L431.3 69.0L428.8 78.8L421.4 92.4L415.3 102.2L410.3 109.6L409.1 115.8L405.4 124.4L404.2 133.0M350.0 82.5L357.4 88.7L364.8 93.6L374.6 103.4L382.0 109.6L391.9 115.8L399.3 121.9L405.4 128.1L404.7 134.2M394.3 99.8L406.7 100.5L423.9 104.7L433.7 109.6L436.2 118.2L437.4 130.5L433.7 145.3L428.8 157.6L416.5 162.6L401.7 165.0L389.4 165.0L379.6 160.1L370.9 150.2L366.0 140.4L366.7 130.5L372.2 118.2L382.0 108.4L394.3 99.8M350.0 150.2L359.9 147.8L372.2 146.6L382.0 141.6L391.9 141.6L404.2 134.2M404.2 134.2L421.4 134.2L437.4 133.0L448.5 131.8L458.4 134.2L468.2 134.2L478.1 137.9L487.9 137.4L502.7 136.7L517.5 136.7L522.4 142.9L532.3 147.8L542.1 155.2L550.0 158.9M405.4 134.2L404.2 147.8L400.5 167.5L396.8 177.3L396.3 200.0M405.4 134.2L411.6 145.3L421.4 152.7L431.3 162.6L438.7 172.4L444.8 184.7L455.9 194.6L460.8 200.0M588.2 6.2L586.9 22.2L593.1 36.9L603.0 45.6L604.7 53.0L603.0 64.0L599.3 73.9L599.8 83.7L604.7 94.8L603.0 99.8L595.6 105.9L590.6 110.8L595.6 121.9L603.0 130.5L609.1 137.9L612.8 147.8L614.5 149.0M550.0 158.9L564.8 157.1L582.0 161.3L594.3 159.6L604.2 155.7L614.5 149.0M614.5 149.0L621.4 147.0L631.3 149.0L641.1 149.8L651.0 147.8L658.4 142.9L665.8 137.9L670.7 134.2L678.1 130.5L687.9 126.8L697.8 120.7L707.6 115.8L717.5 112.1L727.3 104.7L737.2 98.5L744.6 94.8L750.0 93.1M658.4 142.9L665.8 150.2L671.9 153.9L672.7 162.6L678.1 168.7L684.2 173.6L685.5 182.3L689.2 188.4L697.8 189.7L707.6 189.7L720.0 188.4L729.8 186.0L742.1 183.5L750.0 182.3M614.5 149.0L605.4 153.9L594.3 160.1L586.9 170.0L577.1 181.0L568.5 192.1L561.1 200.0M733.2 101.0L747.9 93.6L762.7 87.4L777.5 81.3L792.3 76.4L805.8 71.4M718.4 187.7L740.5 182.3L757.8 179.8L772.6 176.1L787.3 173.6L797.2 173.2L805.8 175.4M715.9 189.7L719.6 197.0L720.3 200.0M6.2 257.1L24.6 256.2L49.3 254.7L64.0 251.7L81.3 245.6L98.5 239.4L110.8 234.5L123.2 228.3L135.5 224.6L150.2 224.1L160.1 225.1M147.8 200.0L145.8 207.4L147.8 214.8L151.5 223.4L160.1 225.1M160.1 225.1L163.8 222.2L170.0 221.7L174.9 224.6L175.4 229.6L171.2 231.5L163.8 231.5L160.6 228.3L160.1 225.1M174.9 224.6L187.2 218.5L194.6 214.8L200.0 209.9L209.4 203.7L215.5 200.0M163.8 231.5L166.3 249.3L170.0 269.0L173.6 286.2L172.4 303.4L171.2 313.3L176.1 330.5L177.8 347.8L182.3 365.0L183.5 382.3L181.0 394.6L177.3 400.0M397.0 200.0L397.0 220.9L395.8 236.9L394.6 249.3L395.8 264.0L397.0 281.3L395.8 298.5M508.4 236.9L502.2 244.3L497.3 256.7L493.6 269.0L485.0 283.7L476.4 298.5M460.3 200.0L471.4 214.8L481.3 229.6L488.7 233.3L498.5 236.9L508.4 236.9L513.3 235.0L521.9 237.4M562.6 200.0L552.7 209.9L545.3 219.7L535.5 227.1L525.6 234.5L521.9 237.4M521.9 237.4L525.6 244.3L535.5 250.5L537.9 264.0L542.9 276.4L544.1 291.1L552.7 303.4L557.6 315.8L562.6 319.5L570.0 320.7L572.4 328.1L577.3 335.5L581.0 342.9L583.5 350.2M583.5 293.6L577.3 303.4L573.6 313.3L570.0 320.7M498.5 360.1L513.3 356.4L530.5 353.2L547.8 350.7L560.1 347.8L572.4 347.3L583.5 350.2L594.6 353.9L600.0 353.2M583.5 337.9L590.9 339.2L594.6 345.3L593.3 357.6L588.4 361.3L581.0 361.3L576.1 357.6L574.4 347.8L577.3 340.4L583.5 337.9M583.5 350.2L589.7 340.4L594.6 334.2L600.0 330.5M583.5 350.2L577.3 360.1L570.0 367.5L562.6 372.4L557.6 379.8L552.7 389.7L550.2 400.0M583.5 350.2L587.2 357.6L590.9 367.5L594.6 377.3L597.0 387.2L600.0 394.6M599.8 330.5L606.0 325.6L615.9 320.7L630.6 315.8L645.4 308.4L655.3 301.0L665.1 293.6L677.4 286.2L689.7 281.3L704.5 276.4L716.8 270.2L724.2 264.0L727.9 256.7L739.0 253.0L748.9 248.0L758.7 241.9L768.6 236.9L778.4 232.0L790.7 228.3L806.0 222.7M721.8 200.0L729.2 207.4L736.5 216.0L746.4 217.2L753.8 227.1L758.7 236.9L761.2 249.3L766.1 264.0L769.8 276.4L770.5 281.3M739.0 253.0L740.2 261.6L748.9 269.0L758.7 273.9L770.5 281.3L778.4 286.2L785.8 292.4L793.2 299.8L800.6 305.9L806.0 308.4M599.8 353.2L606.0 353.9L615.9 360.1L630.6 362.6L650.3 366.3L667.6 368.0L687.3 368.7L709.4 371.9L729.2 371.9L743.9 373.6L753.8 372.4L763.6 367.5L773.5 361.3L783.3 357.6L793.2 351.5L800.6 345.3L806.0 341.6M6.2 460.3L22.2 462.8L39.4 464.5L56.7 466.5L73.9 469.0L86.2 473.9L98.5 475.1L110.8 473.9L123.2 473.4L135.5 473.4L145.3 477.6L152.7 480.0L167.5 480.0L182.3 478.8L200.0 475.1M177.3 400.0L172.4 412.3L165.0 424.6L161.3 436.9L161.3 449.3L157.6 461.6L155.2 469.0L152.7 480.0L147.8 488.7L141.6 498.5L136.7 510.8L134.2 523.2L131.8 537.9L130.0 552.7L129.3 572.4L129.3 587.2L128.1 600.0M145.3 477.6L149.0 472.7L155.2 469.0M200.0 475.1L214.8 475.9L232.0 474.4L251.7 473.9L261.6 473.4L270.0 469.2L284.7 464.3L291.9 455.9L300.0 446.6M261.6 473.4L255.4 478.8L251.7 488.7L248.0 501.0L239.4 512.1L236.5 518.2L236.5 525.6L229.6 534.2L223.4 541.6L217.2 549.0L216.0 560.1L215.3 572.4L212.3 587.2L208.6 597.0L206.2 600.0M400.0 544.1L392.1 552.7L382.3 562.6L372.4 572.4L360.1 582.3L347.8 589.7L335.5 595.8L320.7 600.0M547.8 400.0L545.3 407.4L537.9 416.0L528.1 424.6L523.2 432.0L515.8 441.9L509.6 449.3L499.8 455.4M427.1 499.8L423.4 508.4L414.8 520.7L407.4 533.0L400.0 544.1M599.8 393.8L608.5 400.0L613.4 409.9L623.2 417.2L628.2 423.4L631.9 430.8L631.9 441.9L630.6 456.7L629.4 473.9L630.1 493.6L630.6 505.9L633.1 518.2L638.0 528.1L645.4 540.4M628.2 423.4L635.6 425.9L638.0 430.8L633.1 436.9L631.9 441.9M638.0 430.8L645.4 436.9L650.3 444.3L667.6 453.0L684.8 460.3L704.5 465.3L724.2 466.5L743.9 471.4L758.7 472.7L773.5 478.8L788.3 485.0L798.1 486.2L803.0 491.1L806.0 494.8M806.0 534.2L803.0 542.9L801.8 557.6L798.1 570.0L793.2 582.3L787.0 594.6L785.8 600.0M6.2 661.4L14.8 660.2L24.6 655.3L39.4 650.3L54.2 646.6L66.5 643.4L78.8 644.2L86.2 646.6L92.4 644.2L103.4 641.7L115.8 640.5L128.1 640.0L137.9 640.5L150.2 642.9L157.6 645.9M9.9 618.3L13.5 628.2L12.3 640.5L13.5 652.8L14.8 660.2M126.1 598.6L126.1 620.8L128.1 633.1L128.6 640.0L134.2 647.9L135.5 655.3L134.2 665.1L133.0 675.0M86.2 646.6L92.4 655.3L98.5 665.1L108.4 670.5L123.2 672.5L133.0 675.0L145.3 681.1L160.1 684.8L170.0 677.4M204.0 598.6L201.6 615.9L193.0 630.6L189.3 640.5L186.8 650.3L185.6 655.3M140.0 640.5L149.9 641.0L159.7 644.2L169.6 650.3L179.4 654.0L185.6 655.3L193.0 656.5L204.0 653.3L213.9 650.3L226.2 646.6L238.5 642.9L245.9 642.9L255.8 645.4L268.1 644.9L277.9 642.9L287.8 640.5L297.6 635.6L307.5 630.6L310.0 623.2L313.6 622.7L322.3 624.5L332.1 625.2L340.0 623.7M185.6 655.3L179.4 666.3L172.0 677.4L164.6 683.6L159.7 686.0L154.8 683.6L147.4 681.1L140.0 679.4M310.0 598.6L307.5 613.4L308.7 620.8L313.6 622.7M330.0 624.6L342.3 627.1L354.6 632.0L366.9 638.2L379.3 636.9L391.6 627.1L403.9 620.9L418.7 618.5L433.4 617.2L443.3 616.0L453.2 620.9L463.0 620.9L477.8 616.0L490.1 616.0L502.4 617.2L514.7 616.0L530.0 618.5M500.0 617.1L514.8 615.9L527.1 622.0L541.9 626.9L556.7 630.6L571.4 636.8L583.7 640.5L598.5 639.3L610.8 639.3L628.1 642.9L640.4 644.2L657.6 646.6L672.4 651.6L682.3 651.6L692.1 654.0L700.0 657.7M645.7 540.0L651.6 573.3L660.0 603.2L673.3 626.5L689.9 643.1L703.2 656.4L711.5 669.7L719.8 689.7L729.8 713.0L739.8 729.6L746.5 746.3L749.8 772.9L754.8 791.2L756.4 806.1M640.0 644.8L653.3 644.8L673.3 651.4L693.2 654.8L706.5 661.4L723.2 661.4L725.8 661.8M726.0 660.2L737.8 662.2L745.7 660.2L755.6 658.2L765.4 656.7L777.2 655.3L785.1 653.9M802.8 540.0L801.9 559.7L796.9 571.5L789.1 585.3L785.1 597.1L785.1 618.8L788.1 632.6L787.1 646.4L785.1 654.3L791.0 666.1L797.9 676.0L803.8 689.8M784.1 642.5L779.2 647.4L777.6 658.2L780.2 666.1L789.1 668.1L794.0 669.1" stroke="#8c7314" stroke-width="1" fill="none" shape-rendering="crispEdges"/>
<path d="M300.2 59.1L303.9 56.2L310.1 56.2L314.5 59.1L315.5 66.5L320.0 70.2L323.6 71.9L320.0 76.4L321.2 83.7L324.9 92.4L322.9 96.1L320.0 88.7L315.5 83.7L314.5 76.4L311.3 69.0L309.6 61.6L303.9 62.8Z" fill="#23405f"/>
<path d="M368.7 261.1L373.6 258.4L377.3 260.3L382.3 264.5L389.7 267.0L394.6 272.7L396.6 276.4L393.3 275.1L388.4 271.4L382.3 268.5L377.3 265.3L372.4 262.8Z" fill="#23405f"/>
<path d="M439.4 376.1L440.6 372.4L444.3 367.5L446.8 363.8L450.5 365.0L448.0 370.0L444.3 373.6L443.1 377.3Z" fill="#23405f"/>
<path d="M606.0 312.1L609.7 308.4L612.2 303.4L613.4 293.6L612.2 287.4L614.6 285.0L615.9 289.9L619.5 286.2L622.0 287.4L620.8 292.4L626.9 293.1L623.2 297.3L619.5 299.8L617.1 304.7L613.4 309.6L609.7 313.3Z" fill="#23405f"/>
<path d="M424.1 413.5L425.9 417.2L427.6 422.2L429.1 425.9L431.5 429.1L430.8 434.5L428.3 433.3L427.1 428.3L424.6 423.4Z" fill="#23405f"/>
<path d="M526.1 502.2L529.3 505.9L531.8 503.4L533.0 509.6L530.5 517.0L531.8 524.4L536.7 525.6L533.0 529.3L534.2 536.7L529.3 537.9L528.1 533.0L525.6 531.8L526.8 525.6L525.1 518.2L528.1 510.8Z" fill="#23405f"/>
<path d="M541.9 606.0L540.6 615.9L546.8 619.5L553.0 615.9L562.8 613.4L563.5 609.7L557.9 610.9L555.4 606.0Z" fill="#23405f"/>
<path d="M121.9 657.7L125.6 652.8L131.8 652.3L136.0 656.5L135.0 663.9L130.5 667.6L124.4 667.6L121.2 663.9Z" fill="#23405f"/>
<path d="M140.4 707.0L144.1 702.1L145.3 695.9L150.2 695.2L153.9 699.6L152.7 707.0L147.8 711.9L142.9 714.4Z" fill="#23405f"/>
<path d="M57.1 685.3L60.3 684.8L62.8 691.0L64.5 698.4L70.2 702.6L78.8 704.5L84.5 707.0L83.7 710.7L76.4 709.0L69.0 707.0L62.8 703.3L59.1 695.9Z" fill="#23405f"/>
<path d="M42.4 681.1L45.6 679.9L49.3 683.6L51.7 688.5L48.0 689.7L44.3 686.0Z" fill="#23405f"/>
<path d="M784.7 736.3L794.7 747.9L793.0 754.6L786.4 749.6L783.7 739.6Z" fill="#23405f"/>
<path d="M771.4 790.2L776.4 788.8L778.1 792.8L771.4 793.5Z" fill="#23405f"/>
<path d="M522.0 710.7L529.6 712.0L537.0 707.0L543.0 703.3L546.8 700.8L545.6 707.0L549.3 705.8L559.0 700.8L569.0 696.0L578.8 690.5L570.2 697.4L562.8 701.6L557.9 706.3L546.8 713.6L534.0 718.3L527.0 715.0ZM342.3 653.0L354.6 651.7L360.8 644.3L357.1 643.1L355.9 636.9L358.3 641.4L363.3 643.8L362.0 648.0L355.9 653.7L344.8 657.1ZM369.4 653.0L375.6 644.3L375.6 632.0L379.3 636.9L383.0 639.4L386.7 630.8L390.3 633.3L389.1 640.6L396.5 644.3L392.8 646.8L383.0 649.3L374.3 652.2ZM417.4 644.3L422.4 640.6L428.5 638.2L432.2 641.9L440.8 640.6L448.2 639.4L454.4 644.3L453.2 648.8L445.8 645.6L438.4 646.8L428.5 648.0L421.1 647.3ZM474.1 657.9L477.8 656.7L483.9 659.1L490.1 656.7L493.8 652.2L498.7 653.0L495.0 657.9L490.1 661.6L487.6 666.5L491.3 671.4L500.0 678.8L506.1 677.6L507.3 681.3L502.4 682.5L497.5 678.8L491.3 675.1L485.2 670.2L481.5 665.3L476.6 662.8ZM506.1 694.8L511.0 693.6L514.7 701.0L515.2 708.4L512.3 712.1L508.6 707.1L506.8 701.0Z" fill="#003f62" stroke="#000" stroke-width="1"/>
<path d="M200.4 683.4L204.0 680.3L205.3 676.0L207.2 672.3L209.0 667.4L211.0 668.0L209.0 676.0L206.0 684.0L203.0 692.0L200.0 697.0L197.0 697.0L197.9 688.3Z" fill="#5c4e49" stroke="#000" stroke-width="1"/>
<path d="M176.0 722.0L182.0 718.0L189.3 724.0L197.9 734.0L201.6 739.0L209.0 739.0L216.4 743.8L226.2 746.2L231.2 753.6L238.6 757.3L238.6 758.6L226.2 757.3L216.4 756.0L206.5 751.2L199.0 746.2L193.0 745.0L188.0 743.8L184.0 742.0L182.0 736.0L181.0 728.0Z" fill="#5c4e49" stroke="#000" stroke-width="1"/>
<path d="M15.7 719.8L21.0 716.7L26.2 715.7L31.4 717.7L34.6 720.9L39.8 722.0L36.6 725.0L33.5 726.0L31.4 729.3L25.0 726.0L20.0 723.0Z" fill="#5c4e49" stroke="#000" stroke-width="1"/>
<path d="M222.9 678.3L224.1 678.2L223.5 676.8L223.5 678.7L223.0 679.2L224.2 680.2M210.6 699.2L212.5 697.0L210.2 697.2M209.4 684.7L209.5 686.0L211.6 686.2M212.5 694.5L214.7 696.5L214.3 698.5L216.3 696.6L217.0 697.7L216.0 698.8M216.5 703.4L215.6 703.8L217.4 705.5L217.5 705.9M204.9 677.9L204.4 676.3L204.7 677.3L205.5 676.7L205.2 676.7L206.6 676.8M213.7 687.3L213.6 686.4L215.2 686.9M218.3 693.3L218.3 695.6L219.6 695.8L221.3 694.5M216.7 705.0L216.5 703.9L216.7 706.1L214.4 707.4L215.9 709.3M222.3 699.5L221.9 697.4L223.7 697.7L222.3 697.7M216.0 682.2L213.6 682.4L215.0 681.6L215.4 683.1L216.1 683.3M208.5 672.1L206.2 674.2L204.2 676.0L203.9 677.2L202.9 676.1M223.7 675.7L221.6 674.0L221.8 672.4L220.7 673.4L220.5 672.6M213.5 684.7L212.4 683.5L213.5 685.8L215.7 685.5M216.5 684.9L218.8 685.5L219.7 685.3L219.8 683.0M220.7 699.3L218.6 698.3L220.8 700.1L219.9 701.8L219.0 704.0L220.1 703.6M225.7 670.0L227.9 670.4L226.3 672.2L228.6 673.1M216.6 683.0L214.6 683.4L216.5 683.8L216.5 685.9L216.0 686.0M204.4 692.0L206.3 689.7L204.9 688.8L207.2 690.2L206.5 688.8L207.3 690.4M225.8 694.8L227.1 695.0L225.0 692.8L223.2 691.2L223.4 690.1L222.6 690.1M210.3 681.5L209.3 683.3L209.8 685.5M225.9 673.8L225.1 673.3L224.5 675.7M207.6 673.4L208.2 674.7L207.6 675.1M209.5 671.7L208.9 670.7L209.0 668.9L210.9 667.0L208.8 666.0M214.2 700.2L212.7 701.5L213.1 699.9M215.1 694.6L216.3 692.7L218.3 692.1L220.5 694.1M211.3 678.3L210.4 676.9L209.5 674.6L210.9 676.7L212.0 675.8L211.4 675.3M205.6 680.7L203.7 679.4L204.3 681.7L204.5 682.6L205.3 681.4L205.5 680.5M210.1 671.7L208.1 672.9L206.1 673.3L205.4 672.0L207.6 669.8M208.6 698.9L207.4 697.0L207.9 698.4L206.0 697.1L207.5 696.6M210.6 701.7L208.3 699.4L209.5 698.7M215.6 701.4L215.6 702.8L213.6 705.0M208.3 698.3L209.8 697.4L207.9 697.5L209.9 696.5M226.1 674.0L227.4 675.6L228.0 676.4M217.7 704.6L216.1 704.3L214.5 705.3L215.3 704.2M224.0 689.6L225.7 689.4L225.1 688.6L224.0 686.3L224.7 685.9L225.0 683.8M212.8 673.9L211.0 676.2L210.0 676.5L208.4 674.5M216.0 675.4L216.0 676.1L215.7 677.0L216.8 675.7L216.8 675.6M209.6 684.3L211.8 683.0L213.9 684.3L214.5 683.6L214.6 685.0M209.0 680.0L210.7 679.4L211.7 680.5L212.1 682.2L214.0 684.4M218.1 675.3L217.8 677.5L218.8 678.8L218.8 678.3L219.4 677.7M224.9 689.4L225.0 687.4L223.8 685.5M222.2 671.8L224.5 672.4L226.7 673.3L224.7 674.9M210.0 701.1L209.5 703.1L209.2 703.7L209.1 702.3L208.8 702.4L210.7 703.2M210.9 683.1L213.1 683.2L213.4 681.0M210.4 675.2L210.6 674.1L211.0 672.9L211.9 674.3M217.5 687.3L218.8 687.7L218.2 686.7M206.9 697.1L209.1 698.4L211.4 696.7L211.4 697.0L210.5 697.0M212.8 688.8L211.0 689.8L210.3 690.0M212.4 696.5L210.5 698.5L210.0 698.8L212.3 699.5L213.4 700.6L214.5 699.2M226.8 691.6L228.9 692.6L231.2 693.5L231.0 694.4L229.6 694.5L230.4 694.9M219.4 705.8L219.3 707.0L220.0 707.7M219.6 684.1L220.2 686.2L221.6 687.9L222.8 689.4M219.0 681.9L220.4 681.5L221.3 680.6L221.1 679.4L219.5 679.5M210.7 672.4L208.6 670.3L208.3 668.7L209.4 667.1L207.4 667.7L206.3 666.8M217.0 677.7L215.9 675.6L217.5 675.7L216.9 675.8L218.0 674.2M220.1 695.9L219.4 697.0L218.9 696.5L218.8 695.4L219.4 696.4M210.4 691.9L212.0 689.6L214.0 690.2L213.1 689.9M222.8 698.6L220.8 699.7L222.5 700.1L222.9 702.2M215.3 674.8L217.2 674.5L216.3 674.0L214.5 672.6M209.6 680.9L211.8 678.7L213.3 676.4M222.6 694.7L223.6 696.2L225.8 696.8L225.0 698.4L223.2 699.3L221.3 698.8M216.2 683.0L218.5 681.8L217.5 682.0L216.9 681.8M210.4 687.6L212.3 689.9L210.2 691.4M225.2 680.8L226.9 679.8L225.4 678.2L226.9 678.9L228.4 676.6L227.8 678.4M217.4 690.2L215.6 690.0L217.3 691.9L215.0 689.8L216.7 687.6M210.8 673.1L209.3 673.1L207.5 672.0M224.2 675.9L223.7 676.6L225.9 677.2L224.7 675.1L226.8 675.6L226.0 676.1M217.8 688.5L219.8 688.8L220.0 689.8M217.2 703.7L218.3 704.9L219.3 706.1M224.1 686.5L222.2 685.6L220.4 683.4L221.2 685.3L222.4 687.2M215.0 696.7L213.1 698.2L211.1 695.9L210.5 697.1L209.6 695.3M225.1 680.2L226.8 680.2L225.4 682.2L225.4 681.7L227.3 681.6L225.5 683.1M216.9 689.9L218.8 691.5L217.8 689.9M213.1 688.5L212.7 686.7L210.6 685.8M223.7 689.0L222.8 688.3L221.9 689.5L221.9 689.6L220.2 691.6L219.4 690.8M215.8 703.5L217.4 705.5L219.4 707.0L217.6 707.1L218.0 709.4L219.4 710.4M222.4 682.4L222.0 682.2L224.3 682.4L222.7 680.7L223.6 681.0M226.4 675.7L228.5 676.2L230.0 678.5L230.9 679.6L229.5 677.5L229.8 678.2M209.4 700.6L207.1 700.0L208.7 701.0L207.7 702.9L208.2 704.6L210.1 704.3M220.7 689.4L222.1 690.5L223.6 692.9L222.5 691.4M222.4 698.0L220.4 698.6L220.5 699.0L220.1 698.2L222.4 695.9L224.7 696.8M219.9 689.3L219.9 691.6L219.0 693.0L219.7 695.3L218.7 694.9M216.8 691.6L216.6 689.9L216.3 688.1L217.6 690.4L216.4 688.1M214.5 693.9L213.8 693.4L215.9 695.3M220.5 702.9L222.2 702.4L222.0 703.8M213.2 697.2L214.5 696.7L216.0 696.6L214.2 694.9L216.6 696.4L216.0 694.6M211.1 684.7L210.8 686.0L210.7 687.0L210.7 689.3L211.7 687.3M210.3 686.9L209.8 688.0L211.4 686.0M217.6 689.0L215.4 689.7L217.4 690.9L218.3 692.5L219.5 694.9M220.9 675.4L222.3 676.3L220.3 675.8M220.5 679.8L222.5 678.0L224.2 676.1L223.6 678.1L222.2 678.2L221.8 680.0M216.2 702.8L217.5 703.4L219.3 701.5L220.5 702.6M212.6 702.4L210.4 703.0L209.5 705.0L207.6 705.0L206.5 703.8M207.7 678.4L208.0 678.9L210.2 679.0L210.7 677.3L210.3 676.3L211.2 675.2M209.3 682.6L208.1 681.1L209.3 682.2L209.7 682.0L208.0 682.0L208.1 680.3M209.3 692.4L208.4 690.6L206.7 689.4L204.7 689.6L205.7 689.9L206.6 688.6M208.9 690.3L208.6 687.9L206.2 687.0L206.8 685.0L205.5 685.8M218.8 688.4L217.0 687.7L215.2 689.6M207.5 690.5L205.5 691.6L203.6 690.7L202.5 688.6L200.2 686.8M213.9 704.3L211.9 703.4L209.6 705.3L211.8 703.4M221.9 673.4L221.4 674.3L222.0 674.4L222.3 674.6L221.8 676.5M219.6 689.6L220.1 687.7L218.9 689.6M217.3 704.7L217.2 704.2L215.3 703.6L216.0 703.8L216.2 705.5M221.9 694.8L222.4 694.5L220.7 692.4M218.3 694.4L218.2 695.9L219.5 695.2L218.5 693.6M207.6 679.9L207.8 677.5L209.3 675.8M214.7 694.5L216.8 694.1L217.3 692.0L217.1 689.7L218.1 687.3M207.4 688.0L207.7 689.4L208.0 691.6L207.3 691.5L208.3 693.5M219.4 672.6L221.1 670.8L218.9 671.8L218.6 672.9L217.4 673.5M219.2 684.5L218.2 686.0L218.0 686.9L218.6 687.0L216.5 687.8M226.0 675.2L227.9 676.4L226.1 676.8L226.0 675.4L226.6 677.6L226.1 676.3M212.1 678.0L213.3 677.3L214.0 678.1L216.1 677.8L215.6 676.0L215.6 674.9M214.2 699.1L216.4 698.9L215.8 698.9M207.8 688.6L210.0 686.3L209.5 687.0M217.3 683.5L217.5 682.3L217.1 680.7M208.4 693.9L209.7 696.0L212.0 694.4M218.5 688.2L217.2 686.0L217.3 684.5L217.3 685.0L219.7 683.0L219.2 682.8M224.1 670.3L225.5 668.0L227.2 667.9L228.3 666.3M207.3 690.1L208.6 690.7L211.0 692.2L211.2 693.1L212.2 694.6M216.2 679.2L215.1 678.2L213.5 679.2L211.5 678.6M226.9 678.5L226.2 677.4L226.1 675.7L224.3 674.5L222.8 676.0M217.3 676.2L218.3 674.9L216.6 674.7L217.6 672.7L219.7 671.1L220.5 668.8M214.0 684.5L214.4 682.8L214.6 680.7L213.4 680.1M211.1 693.9L210.4 695.5L209.0 696.5L208.3 696.7L206.3 698.3L204.9 698.1M211.2 699.5L211.7 700.8L210.5 698.7M224.5 680.7L226.7 681.3L224.8 683.0L225.4 681.8M209.1 688.0L211.1 690.3L209.7 692.5M220.3 688.4L221.4 689.4L222.9 691.7L223.2 692.5L223.4 691.2M220.6 689.8L222.3 692.0L223.6 691.6L222.5 689.7M224.5 673.6L224.3 671.4L222.9 672.9M217.3 703.9L215.4 704.8L213.2 704.4L212.9 706.6M218.7 675.9L218.8 674.4L218.1 676.2L220.4 677.5L218.4 679.5L218.2 681.1M208.4 674.2L208.2 674.6L206.1 676.4L206.4 674.4L206.0 674.5M218.1 680.1L220.1 680.0L222.2 680.2L224.1 680.1L223.8 680.5M211.8 674.3L209.8 674.8L211.1 674.2L210.6 674.2L208.3 674.6M204.9 688.8L206.8 688.0L206.2 688.3M219.7 690.9L221.6 688.9L221.8 688.1L223.8 688.3L225.9 690.2L225.2 688.5M218.3 691.1L217.5 691.2L219.0 693.5L220.7 694.1L218.5 692.0L219.1 693.5M217.6 690.5L215.6 688.9L217.6 687.8M206.1 679.4L204.8 677.5L205.8 675.3L205.9 676.7L207.4 675.2M217.4 689.6L219.5 691.4L217.7 691.1L217.1 692.3L214.8 691.4M205.0 691.1L203.5 693.0L202.2 693.4L204.5 693.5L205.5 693.3L206.9 692.6M215.3 704.0L213.9 706.1L211.6 708.4L209.3 707.2L209.6 704.9M222.9 671.8L220.7 672.0L219.3 671.0L219.2 670.3M213.7 693.6L214.1 692.1L214.7 694.2L215.1 694.8M213.0 687.2L213.7 687.6L214.3 689.3M224.4 690.8L222.4 690.5L223.4 691.9L225.5 693.5L225.8 693.8M216.4 686.8L216.9 685.2L215.8 686.8L214.8 688.0L214.3 688.2L213.1 685.9M222.7 698.5L224.6 697.2L224.3 698.1L226.4 699.1L227.0 698.5L226.7 699.2M202.8 699.9L202.2 697.7L202.2 695.5M184.8 713.7L187.0 714.4L187.4 712.2M200.7 699.0L198.5 700.7L197.5 699.0L195.7 698.0M208.1 704.1L207.5 704.3L205.4 702.2L204.0 703.1M195.6 709.4L195.0 708.2L193.4 709.5L191.4 708.6L191.4 707.8L191.1 708.3M184.2 717.2L185.5 715.5L185.4 713.3L186.2 714.6M200.3 731.5L199.5 730.8L199.5 732.2L197.4 730.2L196.3 731.2M191.8 719.8L190.8 719.2L191.6 716.9L191.4 715.3L189.6 713.2L190.9 711.4M189.8 712.4L187.8 712.2L188.1 714.0L189.6 715.7L188.5 715.3L187.9 717.2M189.4 716.1L188.3 713.7L187.9 713.1L188.2 715.3M204.1 717.3L203.9 719.1L206.0 720.0M199.9 712.7L197.9 713.3L195.8 711.3L194.5 709.6L193.7 707.5L191.3 705.8M201.6 702.9L203.8 703.3L203.7 701.5L203.6 703.8L203.5 702.9M205.7 715.9L205.7 714.4L207.9 713.8L208.8 715.8M206.2 708.7L207.2 707.6L206.5 706.0M206.9 710.0L207.5 711.4L208.7 709.9L207.4 709.4M207.7 704.9L207.0 702.6L204.7 701.6L203.6 702.5L205.8 702.2L207.9 704.6M206.0 715.8L205.7 716.5L203.7 718.6L204.7 718.5M205.8 700.3L204.2 698.6L202.5 700.5L204.0 698.8M203.0 710.8L200.7 712.2L201.8 710.3L203.0 708.6M188.7 716.7L187.6 716.4L185.8 718.3L185.1 718.1L185.5 720.1M198.0 718.0L199.8 719.3L200.3 720.6M201.8 701.7L200.9 701.8L201.2 703.2M185.3 719.1L183.8 716.9L181.9 716.6L179.6 718.5M198.2 728.8L199.2 730.6L201.3 729.5L201.6 731.6M208.9 702.4L208.3 701.5L209.2 701.2M188.7 708.9L190.6 707.3L191.7 708.0M208.6 703.4L211.0 702.9L210.6 702.2L208.7 701.6L207.9 701.4L208.9 700.8M198.5 708.6L196.7 710.6L195.3 712.5M211.0 704.2L212.5 705.8L213.4 708.0L212.9 708.1M198.4 716.5L196.5 714.4L197.4 714.0L195.3 716.1L196.0 717.6M196.5 710.4L198.5 709.2L196.7 709.4L195.5 707.5L193.9 705.3L192.4 704.4M191.2 716.7L190.1 718.2L192.5 715.9L190.2 716.0M189.8 714.6L190.5 714.8L192.4 717.1L191.5 715.7L190.2 714.3L192.0 715.4M194.1 716.9L194.6 717.9L192.4 716.3L191.3 714.0L190.7 713.1M190.9 722.8L190.9 720.5L189.7 718.5L189.3 716.3M189.4 720.1L190.1 721.1L191.9 720.6L191.1 722.9M202.5 698.7L203.7 700.2L201.9 700.3L202.0 701.9L203.4 703.5L203.8 705.4M199.8 721.7L199.8 719.3L201.2 720.5L201.2 720.7M203.1 699.6L201.9 697.6L200.7 698.7L199.3 699.8L201.6 699.8L201.1 699.7M201.7 722.3L202.2 721.5L202.9 722.4M201.8 702.3L199.7 701.1L200.6 702.1L201.4 701.1L201.5 700.9L201.3 699.1M210.6 704.9L212.7 702.5L212.5 704.1M212.3 705.3L210.5 705.4L212.7 703.7M196.4 708.9L196.0 708.3L194.1 707.5L193.3 706.7M205.7 707.0L205.1 709.4L205.6 708.7M195.6 707.8L194.6 705.7L195.4 706.3M195.9 709.4L197.3 709.1L195.0 710.3L194.5 712.1L194.8 710.7M195.1 721.2L195.8 720.2L193.6 722.2L191.8 722.1M192.9 708.7L192.5 707.5L192.4 708.3L190.6 709.0L188.5 709.0M196.4 710.1L196.1 710.3L194.9 708.8L195.1 707.9L194.5 709.4L193.1 707.1M209.8 712.1L209.3 711.3L207.2 710.2L209.4 708.4M198.1 721.8L196.1 723.7L195.5 724.4L195.2 723.5M186.0 713.8L188.2 713.7L186.2 715.8L188.2 715.9L188.1 715.7L189.4 714.3M185.9 719.4L186.6 718.5L184.8 717.3M202.3 724.5L200.4 723.6L202.5 722.1M189.7 717.7L187.4 717.3L188.1 715.2L186.7 717.0M202.7 700.2L203.5 702.2L202.2 700.0L201.4 699.6M203.8 704.8L205.0 704.8L203.5 707.1L202.6 708.6L201.3 707.3M206.3 708.6L206.8 710.5L206.8 712.5L204.6 712.9L206.7 710.8L204.4 711.3M195.2 725.0L194.7 726.9L196.6 728.0L199.0 730.1M192.5 704.3L190.2 705.1L189.6 704.5L188.8 702.9L186.4 701.8L185.7 704.0M188.6 711.1L190.1 710.7L187.9 710.6L187.3 712.6L185.9 712.0M195.1 729.0L192.9 726.8L190.8 728.8L189.6 730.0L191.5 729.2L190.4 731.4M201.7 707.3L203.7 706.4L204.8 706.8L206.3 709.0L204.2 710.5M196.9 727.6L198.8 729.1L197.1 729.1L194.7 731.2L193.8 732.1M198.3 712.4L197.1 710.3L194.9 710.6L194.0 712.9M185.0 716.6L183.4 714.9L183.2 716.8L182.0 716.9L183.3 718.2L184.6 717.2M190.9 707.5L192.0 706.1L190.8 704.9L189.1 706.7L189.5 705.9M198.2 706.1L198.9 708.5L197.0 708.4M200.6 733.6L200.7 732.1L201.2 733.4L202.0 731.1L202.6 732.1M195.0 711.6L193.0 709.4L193.0 709.3L192.5 710.7L193.3 709.1M199.0 722.7L200.0 722.3L198.9 721.4L201.1 720.5L201.4 719.8L201.0 721.5M208.2 713.0L208.0 711.4L205.7 711.6L206.4 713.6L204.4 714.2M193.8 716.9L193.1 715.3L191.5 713.2L190.9 714.4M192.0 720.9L190.0 722.0L190.9 723.8L191.6 725.5L192.2 726.1L190.7 726.0M200.1 698.6L199.5 696.8L198.3 697.9L200.2 695.7M200.0 726.8L200.8 726.0L200.2 725.8M202.7 709.1L202.4 709.9L202.1 709.6L199.8 710.2M197.6 706.3L199.2 707.8L198.8 705.7L198.1 705.0L199.5 705.1L200.3 702.9M192.0 725.4L189.8 725.4L189.2 727.6M208.1 704.6L207.0 706.1L208.5 707.0L209.5 705.7L211.1 706.2L209.9 705.4M201.6 732.7L199.9 732.7L201.9 731.3L200.8 731.3L199.9 729.1L198.4 727.4M210.6 703.6L208.8 703.8L209.4 703.1L211.2 703.4L211.6 705.2M202.1 712.5L201.0 714.9L201.4 714.2L202.6 713.9L201.1 715.1M190.0 722.2L191.2 723.4L189.8 722.4L190.4 722.0L189.8 719.8M197.6 721.1L195.3 718.7L194.6 716.9M193.4 705.8L193.8 704.4L194.4 704.3L192.6 706.4L191.4 704.7M194.8 707.4L192.7 709.0L194.6 709.4M200.5 720.7L199.3 722.7L197.1 722.8L196.6 721.5L194.5 722.9L192.2 723.1M188.3 721.0L189.8 719.4L188.9 718.4L186.7 720.3L188.1 721.3L185.7 723.0M205.8 715.3L204.3 717.7L203.1 718.4L201.3 720.3L203.3 722.4L202.2 720.3M202.3 723.8L201.3 725.8L203.2 723.8L203.3 722.2L205.2 723.9M211.3 704.6L210.4 703.3L212.4 703.9L213.3 704.7L215.6 704.6L217.3 705.5M205.2 719.5L206.5 719.0L207.0 719.3L205.4 717.0L203.5 717.6M206.4 704.9L208.2 706.1L209.2 705.5M202.2 715.8L200.3 717.0L198.8 716.2L198.5 713.9M190.1 708.1L192.1 709.4L192.6 709.3L191.6 710.5L193.0 708.2M198.5 700.9L199.5 701.1L198.2 702.8L196.2 704.3L194.6 701.9L193.2 703.2M197.7 716.4L199.9 716.8L202.1 716.9L202.5 715.2M199.9 701.1L199.2 700.6L198.7 702.5L196.7 704.4L194.5 703.0M198.0 711.9L200.1 710.2L200.6 711.1L201.1 708.8M200.6 717.6L201.3 718.7L199.8 718.4L201.1 718.8L199.3 718.6L201.1 717.4M189.8 709.9L188.2 709.0L186.7 711.3L187.8 709.4L190.0 707.5M195.9 704.7L194.8 706.6L194.6 704.2M200.8 722.5L201.6 723.2L203.4 723.9L203.8 722.6M195.8 707.2L197.7 706.0L197.2 707.0M210.6 709.9L210.1 709.9L212.4 707.7M199.3 703.3L199.4 701.4L199.8 701.6L200.8 701.7M198.6 713.2L197.3 714.1L196.7 715.3L194.9 717.6L194.2 715.5L193.1 715.0M175.6 744.6L174.4 743.3L172.2 744.1L174.6 744.8L176.1 746.5M165.6 729.0L165.6 730.9L167.4 730.3L169.4 732.2L169.1 734.1L167.5 732.5M157.0 720.6L155.3 720.6L157.7 721.5L156.1 723.4M174.4 744.6L175.8 743.9L178.1 746.1L176.5 747.3L177.5 747.1M166.2 734.1L166.2 735.7L165.5 737.5L167.5 737.3L167.8 739.3L168.9 739.3M156.7 727.0L158.5 727.5L159.9 727.4L158.9 728.9M175.5 737.2L174.6 735.8L174.7 737.9L175.2 735.8L176.8 736.9L178.7 735.4M153.2 735.5L151.9 734.1L153.8 733.7L154.8 731.5L154.2 729.9M154.7 720.9L154.2 718.7L156.5 717.0M168.8 744.9L167.8 744.9L166.9 745.1M158.0 730.3L157.9 729.0L158.7 728.1L156.8 727.8M167.9 729.9L166.2 732.1L165.1 732.6L164.7 730.3L164.9 728.6M154.9 717.1L154.9 719.4L157.0 721.8L155.7 721.6M157.6 738.4L156.5 738.1L156.6 735.7L154.4 735.2L152.5 736.3M157.3 717.3L158.5 715.4L156.2 716.2L156.0 716.4M161.6 742.4L162.7 742.1L162.8 742.5L160.6 742.1M161.2 735.3L161.7 734.3L164.0 733.7M153.0 726.2L154.5 724.0L155.2 723.9M177.3 739.4L176.3 738.8L178.4 736.7M167.5 729.8L165.8 729.1L167.6 727.9L165.8 728.5L165.0 728.0L163.6 726.1M168.9 733.2L170.0 733.2L169.3 733.0M166.1 733.5L168.2 735.1L167.2 733.9L167.2 732.7L166.8 733.6L168.8 734.0M154.4 730.9L155.8 732.9L156.7 734.4M161.9 743.5L161.6 743.6L159.8 743.8L161.9 745.0L160.0 745.1M177.5 732.8L177.0 735.2L178.4 735.5L176.7 735.3M165.6 733.7L164.4 734.9L164.0 735.6L163.3 735.8L164.4 737.8L162.4 739.3M172.3 735.9L171.8 736.7L174.1 737.4L171.7 737.2M169.9 748.1L169.5 746.7L169.8 746.2M161.9 737.0L160.8 739.0L161.2 739.0L161.8 736.6M170.8 733.7L170.6 732.3L172.9 730.3L170.5 730.2M175.7 741.3L177.7 743.3L177.5 745.2L177.3 747.5L177.9 746.8L179.1 748.9M169.2 748.8L167.0 748.8L169.4 749.7L167.7 748.6M170.7 734.4L170.7 734.6L172.6 732.6L174.2 731.6M169.8 747.2L169.9 749.2L169.9 747.9L170.4 749.5L168.7 749.5L166.7 747.3M179.1 737.1L177.0 735.3L177.9 736.7L179.6 735.3L178.9 734.5M161.1 734.4L160.9 732.6L161.9 735.0L160.6 733.9L158.9 735.8M164.3 745.4L162.8 743.6L161.1 742.5L161.3 741.9L162.8 743.1M158.5 744.0L159.7 745.2L161.5 747.3L162.7 749.6L161.7 750.1M170.6 728.8L170.5 727.6L172.4 727.4L170.4 729.4L169.5 728.8L171.8 726.9M155.0 716.3L152.7 715.5L154.2 715.9L154.4 715.8L156.4 715.1L154.9 715.1M178.9 740.9L180.6 739.3L178.5 739.0M158.3 726.8L157.5 728.1L158.0 727.6M164.5 739.6L164.7 740.2L162.7 740.3L163.5 740.3L163.1 741.2M155.1 729.6L152.9 727.7L155.3 725.9L157.4 726.8L159.4 724.8L158.5 726.2M164.7 737.0L165.7 737.2L163.5 737.5L161.1 739.0M160.3 735.7L158.6 735.7L156.8 733.8L154.9 732.5M151.5 722.3L150.8 723.0L150.2 725.1L150.4 726.4L151.2 726.5L152.8 724.8M156.1 727.6L155.8 727.2L157.2 728.7L157.5 728.5M158.7 745.9L157.4 746.9L158.3 747.6L156.1 747.9L154.6 746.4M167.8 740.7L168.9 741.7L168.8 739.5M175.6 738.7L176.5 741.1L174.8 742.0M176.6 740.1L175.0 739.2L176.5 740.9L176.6 738.8M177.6 741.7L177.3 742.5L175.5 743.4M156.5 727.3L157.0 728.5L158.8 728.2L157.1 726.6L158.8 728.4L161.1 727.8M168.8 739.5L168.5 740.7L170.2 739.9L168.1 739.3L168.7 739.1L170.0 739.9M166.4 748.4L164.0 750.2L162.6 749.3M159.7 724.0L161.3 721.9L161.1 723.0L160.1 723.3L158.7 721.7M173.7 744.0L175.6 744.7L175.6 746.1L177.6 744.5L176.7 746.7L178.7 745.3M168.1 743.2L166.8 741.8L164.7 742.6L163.0 743.2L162.5 742.9L164.7 742.4M164.5 729.3L163.3 727.2L163.4 729.1L163.9 729.3M158.3 728.7L158.4 730.0L158.8 731.0L159.9 729.7L157.6 729.6M153.9 719.1L152.6 716.9L150.9 715.9L152.2 716.6L152.4 717.5M167.0 745.8L167.5 744.0L168.9 743.3M179.1 740.3L181.0 740.4L183.2 738.1L182.5 739.7L180.1 740.6L182.5 741.6M166.5 739.2L166.2 738.0L164.7 738.5L162.3 739.8L163.4 739.1L161.9 736.7M156.7 715.7L154.8 716.2L152.7 714.9L151.2 712.5L150.8 712.5M158.6 741.0L158.7 743.4L160.7 743.1M179.0 738.8L177.4 739.2L175.6 738.5L173.3 739.5L175.6 740.2L176.0 739.0M163.5 733.0L163.2 734.3L162.5 734.9L160.3 734.4L161.9 734.1L163.9 731.8M177.9 733.5L178.8 732.3L179.8 731.7L181.5 731.5L182.3 731.7M166.4 732.8L166.0 732.8L167.9 734.0L168.6 736.2L166.8 736.7M169.1 732.5L168.9 734.7L169.9 735.8L171.9 736.1L170.3 734.8L172.2 733.2M163.8 743.5L163.3 745.4L163.7 745.0L164.4 746.3M177.5 741.8L177.0 739.6L176.8 737.8M168.5 744.5L169.7 746.6L171.1 746.7L171.0 747.3M168.5 727.8L168.4 728.8L166.3 728.0L166.2 729.9L168.5 731.7M169.6 737.7L170.7 736.9L169.9 738.3L169.4 738.7M164.9 745.8L164.9 746.1L163.6 747.8M176.5 738.3L174.1 739.5L175.2 740.3L176.1 741.3M169.0 732.6L170.2 731.5L170.8 729.2L170.1 727.4M177.9 740.6L176.2 740.5L174.2 742.0L174.3 743.4L173.3 741.1M168.0 732.9L169.7 733.9L169.5 731.8L171.8 733.5M160.7 726.2L162.4 724.5L164.4 722.3M153.6 717.5L153.6 719.5L155.9 721.6M168.8 728.1L169.9 726.6L170.2 724.3L167.9 725.0L168.9 726.7L170.1 725.0M170.7 733.7L169.8 735.5L168.1 736.7L165.7 734.7L164.0 736.6M173.8 742.2L171.8 744.2L172.2 745.6L170.9 744.8M152.7 721.0L151.3 721.7L149.1 724.0L148.7 724.0L149.0 726.0L149.1 724.2M173.5 744.7L174.0 745.7L172.2 745.7L172.6 746.3L171.1 748.6M157.2 742.1L157.0 741.3L154.8 739.4L152.5 737.5L154.0 736.8L152.8 736.5M151.2 720.2L153.3 721.8L151.7 720.1L149.8 719.2M162.9 742.6L161.4 740.2L162.8 739.7M158.2 724.4L158.5 726.7L160.6 725.8L160.9 725.8L162.7 725.2M159.0 729.9L158.0 730.3L158.1 730.6L157.3 728.6L154.9 730.6L156.8 730.5M165.4 733.2L163.7 731.9L165.2 733.0L167.5 732.7L169.8 734.5M165.5 751.4L167.3 750.4L167.1 751.7L165.1 751.1M166.9 731.7L168.8 732.0L167.9 734.4M172.3 747.0L172.6 748.6L172.7 747.4L171.6 746.3M162.2 752.1L160.1 752.1L160.4 754.2M151.3 727.4L149.2 726.8L151.4 726.5L152.3 728.3L150.1 727.5L149.7 726.2M161.7 742.3L161.3 744.7L159.3 747.0L160.5 744.8M150.8 722.2L150.5 723.0L151.8 723.9L151.0 725.6L149.0 723.3L149.1 725.5M175.5 735.7L173.2 734.5L170.9 734.9L172.9 736.8M170.6 741.3L168.2 739.9L166.6 740.5L166.3 742.3L166.6 740.3L167.1 738.2M175.3 739.8L173.7 738.0L172.3 736.8M169.8 740.3L172.2 739.6L173.1 738.2L172.6 735.8M159.3 729.0L161.7 726.8L160.8 724.8L160.7 725.6L161.2 724.9M179.6 739.8L181.4 741.3L183.6 739.8L184.1 741.8L184.8 739.8L182.7 738.0M164.7 735.5L164.3 734.0L163.6 733.1L161.8 733.6M164.4 727.0L165.5 728.6L163.1 727.2M157.4 716.3L155.5 714.4L155.8 714.9M173.1 745.0L171.3 746.8L169.8 745.5L171.7 744.4M155.5 738.6L156.6 736.7L157.5 734.4L155.1 732.5M164.3 740.7L165.9 743.0L167.5 742.2M158.5 745.6L156.9 744.2L156.5 745.8M158.3 739.8L157.7 740.2L156.4 741.9L156.1 741.8L156.9 741.0M174.9 732.7L174.7 734.9L176.9 735.8L175.6 736.1L175.9 737.3L177.8 738.6M158.2 732.4L159.4 734.2L161.7 735.4L163.5 737.0L161.9 737.9M158.4 743.1L160.2 743.5L158.0 744.4L159.0 742.2L161.0 740.0L163.0 741.0M166.5 748.9L166.5 748.2L164.5 747.9L164.7 749.6M153.1 725.4L153.7 726.7L151.6 725.3M175.0 742.5L174.7 743.7L172.4 742.8L174.1 743.4L176.2 742.0L175.8 741.8M166.1 741.3L165.2 743.4L166.2 745.1L166.3 742.9M168.4 737.8L166.3 736.6L166.7 738.8L167.7 736.7M164.9 739.0L165.3 738.6L164.5 738.8M157.5 724.3L156.7 725.3L157.6 725.2L159.0 724.4L156.6 726.0M173.0 744.7L172.5 744.4L173.1 746.2M158.6 745.6L157.4 743.3L155.8 744.0M160.8 752.6L158.6 751.8L159.7 750.3L160.5 748.6L159.3 748.6M176.4 736.1L176.7 736.2L177.1 736.4L176.8 735.9L176.3 738.3M111.8 759.2L110.3 757.0L108.6 758.5L108.6 758.0M101.6 748.7L101.6 747.2L103.1 745.3L101.9 743.0L100.7 742.5L102.7 741.9M132.2 746.3L131.5 747.2L131.5 747.9M146.9 750.8L147.4 751.0L145.2 752.0L143.5 753.7M123.7 750.9L122.7 750.2L124.5 748.4L125.8 746.5L126.7 747.5L128.9 749.1M126.2 742.3L125.5 741.3L126.2 742.8L128.0 744.8M128.3 745.6L127.4 744.2L125.1 743.1M115.5 753.5L114.0 753.0L112.4 753.8L114.6 752.4L115.9 751.4L113.6 752.7M117.8 741.7L119.7 740.0L120.0 739.6L118.0 737.5L119.1 735.3L119.8 736.5M127.4 741.4L128.4 743.7L126.3 741.4L124.6 740.8L124.9 742.0L124.2 744.2M100.2 756.4L98.0 756.9L99.9 758.7L101.4 760.2M108.9 745.4L108.7 743.4L109.2 743.4L109.0 741.8L107.2 742.1L107.0 740.3M122.9 754.0L123.2 755.5L122.9 753.3L120.8 751.5L119.4 749.1L119.9 751.0M134.1 756.2L136.4 757.4L136.8 759.0M129.6 749.0L129.7 750.2L130.4 747.8L131.0 749.8L132.1 751.9M115.4 750.0L116.9 751.2L116.0 750.2L117.6 749.6L119.5 750.3M105.7 748.7L107.9 750.3L107.0 749.3L107.5 751.0L108.4 753.1L109.5 754.6M131.5 746.0L130.0 747.5L130.0 745.5L128.4 745.5L130.2 747.8L131.5 748.4M142.9 759.7L144.4 759.7L143.3 761.6L142.9 760.9L145.1 762.3M138.9 743.5L138.2 744.8L139.6 744.3L140.4 745.7M151.6 758.2L149.3 756.8L148.2 754.8L148.0 755.6M114.7 750.5L115.2 752.2L115.9 751.3L113.7 753.4M144.7 752.4L147.0 750.3L145.8 748.1L147.1 746.8L148.3 749.0M103.4 757.8L103.1 756.2L105.0 754.5L106.1 752.4L106.3 750.4M148.1 745.4L146.2 743.3L146.5 744.4L148.1 744.7M117.0 757.4L115.1 758.4L113.1 756.7L114.3 755.4L113.0 753.8L111.2 753.5M136.1 747.9L135.7 750.0L136.1 751.9L138.1 752.8L140.4 752.7M119.1 756.6L118.1 757.4L118.0 755.6L119.6 755.6M111.3 749.6L112.9 750.3L111.1 749.8L108.8 749.2M136.3 751.7L137.9 749.3L139.5 749.1L141.7 750.4M143.8 750.4L143.2 750.4L145.5 751.5M119.2 759.7L121.3 760.4L121.2 758.8M112.3 746.0L114.3 747.3L114.0 748.4L114.8 749.5L116.9 750.3M149.9 749.2L149.2 749.5L148.3 750.2L149.7 751.6L150.8 752.0L149.7 753.6M115.1 756.9L115.8 754.9L117.7 754.7L116.0 756.9L114.1 758.0L114.9 757.3M129.8 742.5L131.1 742.5L128.9 742.7L129.7 741.8M107.7 746.8L109.9 744.5L109.6 746.1L108.7 743.8M111.1 745.0L110.7 746.9L108.3 749.2M105.0 749.2L107.0 750.5L108.5 750.1L106.6 750.1L104.6 750.9L105.9 752.3M136.7 758.6L137.4 757.4L138.4 756.0L136.1 753.9L136.0 754.8L134.7 754.3M136.0 743.8L136.5 743.3L135.1 744.3L136.1 742.8L137.6 743.5M145.1 755.2L143.4 756.7L142.2 758.7L141.8 760.6L143.4 760.8L143.4 760.6M131.9 746.0L132.4 745.9L131.1 747.3L131.6 745.7M112.5 742.9L111.7 741.1L113.0 739.0L112.2 739.4M134.4 753.8L136.0 755.9L135.5 757.2L133.7 756.6L135.4 757.4L135.1 757.9M125.3 750.1L123.0 747.7L124.0 748.6L123.1 749.6M123.1 739.8L121.7 740.4L119.6 739.6M120.0 744.9L120.5 747.1L121.6 746.0L123.8 747.9L121.6 749.5L122.1 748.3M141.8 759.6L141.9 759.6L141.4 759.4M124.7 755.7L127.0 756.0L127.5 757.5L125.9 756.7M115.3 750.0L115.9 749.8L114.3 748.1L115.7 750.0L115.0 750.2L115.9 750.7M114.3 758.0L114.0 759.0L112.5 759.2L113.3 759.9L112.3 758.3L110.3 756.5M109.6 748.7L110.6 748.4L111.9 746.1L111.1 744.3M126.9 750.6L126.6 750.0L125.8 748.1M110.1 748.7L108.1 750.4L105.9 748.6L105.6 747.8L105.7 748.7L106.2 750.0M124.4 752.9L126.0 754.2L127.1 752.9L125.7 753.5L127.3 755.1L129.3 753.7M127.1 755.9L129.5 755.3L130.9 755.3L131.2 757.0L133.3 756.1M111.4 758.2L113.3 756.8L115.0 755.2M107.6 744.3L105.7 745.4L107.8 744.8L109.9 744.5L109.8 743.2L111.7 741.0M147.8 752.9L148.1 753.5L148.8 753.1M137.7 759.9L135.5 760.5L136.1 760.8L138.2 758.6L135.9 759.7M142.5 746.0L143.9 746.7L143.3 744.7L145.6 746.5L147.6 746.6M114.6 751.8L112.3 749.5L113.6 748.6L113.6 747.3L111.5 746.5L110.8 745.9M127.4 756.9L129.7 758.3L132.1 758.9L131.1 756.6L130.0 758.2M127.4 751.7L127.7 750.8L127.9 749.4L126.2 747.2L126.3 747.7M118.4 747.8L117.6 750.0L116.7 751.9L114.9 751.7L117.3 752.6M139.4 757.4L140.9 757.6L143.1 758.8L140.7 757.8L142.6 756.0M100.8 750.8L103.1 753.0L103.7 754.0L103.8 755.7L104.8 753.9L105.4 751.7M117.4 745.3L118.7 745.6L120.8 745.6L122.1 745.1M149.0 749.4L149.0 750.6L147.0 750.1L146.2 751.9L146.2 751.3L147.0 753.5M143.2 755.7L144.6 756.0L144.1 755.1L143.0 754.3M126.0 757.0L125.7 757.1L127.3 756.3L127.2 755.0M129.9 741.8L131.6 740.2L130.3 741.7L132.5 742.4M129.7 743.0L127.9 741.9L125.6 742.8M104.1 756.8L105.4 757.5L106.6 758.3L104.8 759.3L105.5 758.6M118.3 744.0L120.1 744.7L118.4 744.2M101.3 747.6L100.8 748.4L100.1 749.3L99.3 751.3L98.9 750.1M122.3 739.7L120.9 739.8L118.7 738.8L117.8 738.0L116.7 735.8M100.4 755.0L101.2 753.7L99.3 755.6M104.1 751.5L102.6 751.3L104.3 753.7L102.3 751.4M119.1 756.9L119.3 755.6L117.2 755.3L115.0 753.5L116.9 755.4L118.7 756.5M135.1 741.0L136.8 741.9L138.6 743.3L138.0 744.2L138.0 745.8M117.7 745.2L116.7 744.9L117.9 742.9L115.8 743.0L116.2 744.5M131.6 742.7L131.3 741.3L130.3 743.1L129.4 741.5L130.0 740.7L128.8 742.6M150.5 755.2L151.6 753.4L152.7 752.0M121.2 742.8L122.8 744.5L123.3 743.0L122.2 742.7M145.0 758.3L145.9 757.3L146.4 759.3L146.0 757.0M131.7 755.2L129.8 753.4L131.0 751.6L130.0 749.4L128.9 750.9L130.8 752.2M121.5 739.4L119.3 737.0L119.6 738.9L120.3 737.1L121.1 735.3M124.4 754.5L123.3 756.1L123.7 755.3L122.3 753.7L121.4 751.7L120.4 750.1M113.6 741.0L113.3 743.3L113.9 745.1L115.6 744.2L113.4 743.1L112.0 745.4M146.4 758.6L147.8 756.6L146.3 759.0L144.0 757.2M128.9 755.2L131.1 757.3L131.1 758.6M115.7 742.5L115.4 742.6L114.5 742.2L116.6 741.6L115.4 741.3L117.5 739.1M124.3 759.8L123.4 759.0L124.3 757.2L126.5 758.1M124.3 749.6L123.6 747.4L123.5 748.0M137.2 751.9L138.6 751.2L136.4 753.1L135.6 751.7L135.5 750.9M108.4 754.8L108.4 755.0L109.2 754.6L106.8 755.0L108.8 754.4L106.9 754.4M133.7 759.5L132.3 760.3L130.6 758.8M106.3 745.1L108.3 746.8L109.3 747.0M141.4 758.0L141.7 755.7L143.9 755.4L142.3 755.0L141.4 755.0M121.5 759.3L120.7 760.8L123.0 759.2L124.9 761.0L124.5 761.1M143.3 747.6L142.8 746.8L141.3 744.6L139.6 746.2M119.3 749.3L119.4 747.9L117.3 748.0L118.7 746.8M149.7 751.4L149.0 752.4L148.4 751.6L148.6 753.8L146.6 753.3M102.8 747.1L101.5 748.9L100.3 750.3M107.1 755.1L106.5 753.1L107.1 755.1L109.4 756.9M133.6 749.0L131.9 749.3L133.6 748.7L131.2 747.8M101.0 750.5L100.4 751.5L101.3 752.5L103.1 754.9L101.6 754.4L103.1 753.2M111.9 750.7L113.4 752.4L114.5 752.7M226.0 755.3L229.4 757.0L228.1 753.5L228.0 751.4L230.7 754.3L230.9 751.4M237.3 755.8L238.4 756.6L235.5 756.0L239.0 755.1L238.4 753.3M237.5 759.6L238.5 757.7L238.0 756.7M228.4 753.0L225.6 754.2L224.3 752.0L224.2 749.4M230.2 758.1L228.0 755.7L229.0 756.2M233.5 753.4L230.8 757.0L227.6 756.4L229.4 755.7L232.8 753.9M239.4 758.5L241.4 757.6L238.4 757.1L237.0 759.3L240.2 757.1L241.5 756.8M240.5 759.5L237.0 756.8L237.7 755.8M231.1 752.3L234.6 755.4L234.0 755.3L234.8 756.4L234.7 758.0M235.9 754.9L234.7 756.0L238.1 759.1L237.2 759.8L235.9 759.1L235.8 761.2M226.1 752.3L223.8 753.1L224.3 754.4M233.4 759.8L236.0 756.6L233.8 759.8L234.6 759.3L236.6 761.5L236.5 761.3" fill="none" stroke="#000" stroke-width="1.6" stroke-linecap="square" shape-rendering="crispEdges"/>
<path d="M210.4 694.8L210.8 695.2L211.6 695.5L210.9 694.5M225.9 678.6L226.5 679.7L227.2 679.1L228.1 679.1L228.7 679.2L228.5 678.9M214.6 680.6L214.2 680.8L214.6 680.2M215.1 691.9L214.9 692.5L215.0 692.0L214.2 691.7M213.2 678.6L212.9 677.7L212.9 677.1L212.3 676.3L211.9 675.3M220.1 705.0L218.9 704.8L219.8 704.2L219.8 704.7L219.6 704.1L220.2 704.6M210.2 697.6L209.5 698.5L209.2 699.0L208.3 700.1L208.6 700.7M209.2 692.2L208.9 692.7L208.5 692.2M208.1 694.7L209.0 693.9L208.9 694.2M223.9 695.2L224.7 695.5L224.8 694.6L224.3 694.4L225.3 694.5L225.8 695.6M216.9 701.1L215.7 700.7L215.7 701.9M216.8 686.7L216.3 685.6L216.3 686.6L216.8 686.0M220.9 701.0L220.7 700.4L221.4 700.6L221.2 701.0L221.0 700.5M220.1 680.3L220.1 680.4L219.7 679.9L219.5 679.1L220.4 678.1L221.2 677.5M211.5 683.4L211.1 682.5L211.1 682.7M218.4 685.2L218.5 684.3L219.2 683.9L220.2 684.0L219.3 682.8M207.7 686.9L206.7 686.3L207.4 685.2L206.8 686.0L206.2 686.7M222.9 676.1L223.1 676.9L224.1 675.9L223.2 676.0L224.0 676.1L223.5 677.2M211.4 671.9L212.4 671.1L211.2 671.2M210.7 672.1L211.4 671.9L211.7 672.7L212.3 672.2L212.9 671.3M215.6 678.8L215.5 677.6L214.4 677.1L214.0 678.1M210.1 701.1L209.9 702.3L210.5 702.2L210.0 702.1L210.9 702.2M208.8 682.9L209.6 681.8L210.6 681.8L210.6 680.9L209.4 680.0L208.4 681.0M218.1 696.3L217.4 696.9L217.8 696.7M225.3 674.1L225.7 674.6L225.5 675.2L224.8 674.1M190.6 707.1L191.0 706.6L191.4 706.4M206.9 701.7L207.7 701.2L208.5 700.9L208.8 700.9M209.3 712.0L210.3 711.1L210.6 712.0L210.8 712.3L210.5 713.2L211.1 713.2M203.5 707.7L203.4 707.1L202.9 706.2L204.1 705.7M195.1 724.0L194.9 725.2L194.1 724.9M191.8 715.1L192.1 714.1L192.0 713.5L192.9 714.6L191.8 713.7L192.3 713.9M193.1 719.4L192.5 719.0L191.7 719.3L191.7 718.7L191.4 717.6L190.9 718.7M200.7 708.1L201.9 707.2L203.0 707.9L201.8 707.3L201.8 706.5M192.6 725.4L191.4 726.4L192.0 727.1L191.2 727.5L190.5 727.4M189.8 712.3L189.7 713.4L188.6 713.7L188.4 714.4L187.5 715.1M211.7 705.3L211.6 705.4L211.3 706.1L210.7 705.8L210.5 704.9L209.9 704.1M205.2 702.8L206.3 703.6L207.1 704.8L207.3 705.6M204.5 719.8L203.9 719.7L205.0 720.6L203.9 721.0L204.9 721.1L204.0 722.0M207.4 709.0L208.5 710.0L207.7 710.9L207.6 711.7M190.9 720.4L191.1 721.1L191.6 719.9M185.9 712.1L185.5 713.1L184.4 712.2L185.5 713.0L186.0 714.1M198.7 729.9L197.6 730.3L198.8 729.9L198.5 730.1L197.9 730.8L199.0 731.9M207.0 711.8L206.4 712.6L207.5 713.2L208.3 712.5L209.2 711.5L209.9 711.4M203.1 699.0L203.6 699.4L203.9 700.1L203.7 699.4M204.5 704.2L204.4 703.5L203.5 703.2L202.8 703.6L202.4 703.7M201.5 715.2L201.4 714.7L200.3 713.6L199.2 713.2L198.9 712.7M192.7 717.6L191.7 716.5L192.6 715.9L192.1 716.7L191.4 716.7L192.0 717.7M190.9 714.4L191.6 714.3L192.2 714.9L191.2 715.7L192.0 715.0L192.2 714.3M199.2 726.6L198.5 725.6L198.1 726.8L198.1 725.9L198.7 727.0L199.6 727.1M186.2 718.9L185.9 717.8L186.3 719.0L186.0 719.9L185.6 719.4M177.0 742.3L176.1 741.7L176.8 740.9L175.9 739.9L177.2 741.3M178.4 735.0L178.7 736.2L178.6 736.1L179.7 735.9M159.6 742.8L159.3 744.2L161.0 744.1L162.6 742.4L161.4 741.2L162.9 741.9M165.1 751.1L166.6 750.8L165.0 751.6M166.6 734.5L165.7 733.8L166.9 733.2M165.1 729.2L166.6 730.0L165.8 728.4L167.3 730.0L166.0 730.0M175.9 737.5L174.9 738.4L174.7 739.2L175.4 739.6L173.8 740.5L175.0 740.3M159.2 732.2L160.3 733.6L161.7 731.8M161.9 735.3L161.0 735.3L161.0 734.6L160.1 735.0M160.8 722.7L162.1 723.2L162.1 724.8M162.2 750.6L161.6 749.9L161.5 750.3L161.9 750.6M176.0 743.5L177.2 744.0L177.5 744.2L178.4 743.7L177.4 743.9L177.5 742.6M166.2 733.1L167.4 733.7L168.9 733.6L169.3 733.8M160.3 745.7L162.1 744.1L163.6 744.8L164.6 743.4L165.1 742.3M170.8 747.2L170.9 748.5L169.9 747.3L171.2 745.7L170.9 745.4L172.3 745.0M167.4 734.6L169.2 736.1L169.1 734.9L167.6 734.1L167.3 734.9L167.9 736.7M163.8 730.4L162.1 730.7L160.4 731.3L160.2 730.8M177.2 738.7L176.8 739.8L176.5 740.2L177.4 739.0L179.0 738.9M167.5 735.4L168.7 734.2L168.9 733.8L167.5 733.4M160.1 751.8L159.2 753.4L158.4 753.0L157.7 753.7L156.7 752.5L155.8 751.8M163.7 735.0L163.7 735.0L162.3 734.1L161.3 735.8M156.7 725.3L157.4 725.2L157.9 724.9L159.0 726.2L160.0 725.6L159.6 727.3M161.5 741.6L162.5 741.6L164.2 742.4M167.5 748.6L168.2 749.3L167.3 748.4L166.4 748.3M155.6 723.1L157.2 721.9L157.2 722.4L158.9 722.6L159.0 723.6L160.0 724.4M169.1 747.9L168.2 746.3L166.6 747.6M160.1 725.7L159.4 725.5L159.6 725.9L160.5 727.4L160.4 728.3M171.4 741.9L171.1 740.5L171.6 738.9L171.2 739.3M155.9 727.8L157.5 726.2L157.6 725.3M165.8 734.8L165.8 733.6L166.1 734.6L166.0 735.3L166.7 735.3L166.3 734.4M176.0 741.2L174.4 742.2L174.6 741.8L176.1 742.1L177.8 741.4L178.7 741.9M157.8 719.1L157.0 717.6L157.1 719.4L156.1 720.6L154.5 720.5L153.9 719.4M156.0 717.9L155.5 716.7L154.2 717.0L153.9 715.7L153.8 716.4M170.2 748.8L169.9 748.7L170.3 749.2L171.0 750.3L169.4 750.8M160.2 739.0L159.8 738.5L161.5 740.2L161.1 741.2M169.1 739.5L167.5 741.3L166.5 739.7M172.4 742.6L172.6 742.3L172.8 743.6L171.1 741.8L169.6 740.3L171.2 742.1M155.5 730.7L156.3 729.1L154.9 727.6L153.6 728.7L155.0 727.4L154.3 727.6M159.8 732.7L161.4 733.7L160.7 733.1L162.0 733.6M158.3 720.4L159.9 719.4L159.5 720.0L160.7 719.6L161.2 718.7L159.4 720.4M118.8 748.6L117.8 746.8L119.1 747.6L118.1 746.6L117.4 747.7L118.0 749.3M111.5 751.3L112.9 752.4L113.5 750.7M123.8 751.8L125.5 752.8L125.0 752.5L123.5 752.5L123.6 751.3M129.3 750.7L131.0 751.9L132.0 752.0L131.1 750.8L130.3 750.6M103.4 753.4L103.2 754.7L101.5 755.9M136.3 740.7L136.3 739.0L135.1 738.0M121.1 746.1L121.7 745.8L121.0 745.8M149.5 755.2L148.6 753.8L147.1 752.4M100.5 751.8L101.3 750.1L102.6 749.8M146.8 753.3L145.6 751.5L145.7 753.0L144.3 751.7M124.2 754.1L123.3 752.5L124.0 752.2L123.2 753.9L122.7 755.0L121.3 755.5M114.8 748.0L116.0 747.1L117.4 748.4L117.1 747.4M109.6 752.7L110.9 751.6L110.6 749.9L109.9 749.2M125.9 749.8L124.9 749.5L123.6 749.7L124.5 751.5L123.1 752.1L121.5 750.6M125.8 754.6L125.9 753.2L125.4 752.4L123.9 751.3L122.8 749.5M131.6 742.5L133.0 740.8L133.5 739.5L135.1 740.2L134.1 740.2M144.0 756.8L144.0 757.2L145.1 757.2L144.1 757.5L143.5 758.3M138.9 757.9L137.8 756.5L137.3 755.7M134.0 752.1L132.7 751.0L133.1 751.9M106.1 758.9L105.6 759.1L104.1 760.7L103.9 762.0M129.9 741.4L130.8 741.1L131.7 739.7L133.1 739.3M106.4 746.4L105.9 746.2L105.6 745.7L106.8 744.6M119.9 757.5L120.3 757.2L121.1 757.4M102.3 759.9L100.5 758.6L99.6 758.0L99.2 757.5L100.6 758.0M139.0 752.3L137.7 754.0L136.5 755.4M110.1 750.8L111.8 749.1L110.4 750.3L111.6 748.5L110.2 748.9L108.7 749.0M123.2 751.1L123.5 752.2L123.6 753.7L124.6 752.4L122.9 751.6M133.9 753.3L132.4 754.5L133.8 753.6L133.1 754.2L134.8 755.2M146.2 746.8L145.5 747.9L144.6 746.1L145.4 746.9L146.7 748.0L145.5 748.3M111.6 745.4L112.5 746.6L114.2 747.8" fill="none" stroke="#003f62" stroke-width="1.6" stroke-linecap="square" shape-rendering="crispEdges"/>
<path d="M806.5 562.4L805.1 561.5L803.1 562.8M806.5 574.9L804.2 575.7L802.7 575.1M806.5 587.5L805.3 586.5L804.1 585.5L801.8 584.1L799.5 582.8M806.5 599.0L804.7 597.8L802.6 596.7L800.4 597.8L799.1 597.0M806.5 611.5L805.4 611.3L804.1 611.9L802.7 612.4L800.3 612.4M806.5 623.8L804.8 624.6L803.5 623.0L802.2 623.7L800.9 624.0L799.7 625.0M806.5 636.2L805.0 636.8L802.9 636.1L800.8 636.4M806.5 648.7L804.9 648.0L803.2 648.3L801.1 648.6" fill="none" stroke="#003f62" stroke-width="3"/>
<path d="M803.1 562.8L801.7 561.5L801.4 559.6M801.0 563.4L801.0 561.3L799.9 562.8M799.8 564.9L799.2 567.2M796.1 567.4L795.3 569.3L795.5 567.3L796.0 565.0M806.5 562.4L805.1 561.5L803.1 562.8L801.0 563.4L799.8 564.9L797.9 565.9L796.1 567.4M804.8 570.4L803.8 572.4L804.1 570.5M803.6 571.1L802.7 569.1L803.3 567.7M802.5 570.5L803.3 571.8M797.7 571.4L797.2 568.9L796.1 570.0L794.7 568.8M806.5 569.3L804.8 570.4L803.6 571.1L802.5 570.5L800.8 571.7L799.6 570.6L797.7 571.4L796.5 572.0L794.9 572.3L793.5 572.4M802.7 575.1L803.5 577.5M800.5 575.1L799.8 573.9L800.2 572.0L799.9 569.6M798.2 576.2L797.3 575.0M806.5 574.9L804.2 575.7L802.7 575.1L800.5 575.1L798.2 576.2L796.5 574.8M804.8 581.6L804.3 579.2L804.7 577.1L804.2 578.8M803.0 580.3L801.6 578.5L800.1 577.1M800.7 581.5L799.8 582.8M796.5 582.5L796.0 580.5L796.9 579.4M806.5 581.4L804.8 581.6L803.0 580.3L800.7 581.5L799.5 582.9L797.7 583.8L796.5 582.5M797.7 581.3L796.6 583.0M795.4 582.6L796.4 585.0M789.4 581.8L789.4 579.7M806.5 587.5L805.3 586.5L804.1 585.5L801.8 584.1L799.5 582.8L797.7 581.3L795.4 582.6L793.2 581.9L791.1 582.8L789.4 581.8M804.7 592.8L803.4 591.7L802.1 590.1L803.0 588.2M801.8 590.9L802.1 589.5L801.0 591.2L801.8 590.1M799.9 591.1L798.9 592.3L798.3 590.0L797.7 588.3M794.0 591.9L793.2 589.8M792.8 591.2L791.8 593.0L791.0 591.8M791.2 590.5L791.3 591.7M806.5 591.7L804.7 592.8L803.7 591.5L801.8 590.9L799.9 591.1L798.1 590.4L795.9 590.5L794.0 591.9L792.8 591.2L791.2 590.5M802.6 596.7L802.6 595.0L801.2 597.4M799.1 597.0L799.8 599.5L800.2 597.2L801.1 594.9M798.1 597.8L798.6 596.4L799.0 594.8M797.0 597.7L796.4 596.3L796.5 597.8M794.7 599.2L794.5 601.6L793.3 602.8L794.2 603.9M791.2 600.2L790.1 598.2L788.7 596.6L787.3 598.6M806.5 599.0L804.7 597.8L802.6 596.7L800.4 597.8L799.1 597.0L798.1 597.8L797.0 597.7L794.7 599.2L792.8 598.7L791.2 600.2M801.4 607.1L802.1 608.7L802.7 610.1L802.3 611.8M797.4 607.1L796.6 608.2M794.9 606.3L793.8 604.9M806.5 605.9L804.1 605.9L802.7 606.5L801.4 607.1L799.7 606.2L797.4 607.1L794.9 606.3M802.7 612.4L803.2 611.1M800.3 612.4L801.1 610.8M789.9 615.2L790.5 617.3M806.5 611.5L805.4 611.3L804.1 611.9L802.7 612.4L800.3 612.4L798.1 613.0L796.2 614.4L794.3 615.1L792.0 615.3L789.9 615.2M805.1 616.5L804.4 615.3L803.5 613.2M802.4 615.3L803.2 613.0L803.6 614.7L804.5 616.8M800.1 616.7L800.4 615.0L799.6 616.0L798.9 618.1M794.0 618.0L793.0 619.6L792.0 621.1M806.5 617.9L805.1 616.5L804.0 616.2L802.4 615.3L800.1 616.7L797.8 618.1L796.0 619.4L794.0 618.0L791.7 617.3M804.8 624.6L803.9 622.4L804.0 620.0M803.5 623.0L803.2 621.2M798.6 623.5L799.4 625.1L799.6 623.2L800.2 622.1M793.7 626.0L793.8 623.7L794.4 622.0L793.8 624.1M806.5 623.8L804.8 624.6L803.5 623.0L802.2 623.7L800.9 624.0L799.7 625.0L798.6 623.5L796.4 624.6L795.2 626.2L793.7 626.0L792.1 626.7L790.7 627.7L788.9 627.5M792.1 627.5L791.6 626.1M806.5 629.5L804.3 628.2L802.9 628.1L801.3 626.6L800.0 625.6L798.5 626.9L797.1 625.3L796.0 626.0L793.9 626.6L792.1 627.5L790.2 627.5M805.0 636.8L804.1 635.4L804.4 634.1M798.5 635.8L797.0 634.4L798.0 636.4M793.3 636.2L792.1 634.6L790.8 633.3M791.1 637.6L789.9 639.5M806.5 636.2L805.0 636.8L802.9 636.1L800.8 636.4L798.5 635.8L797.3 636.9L795.0 637.2L793.3 636.2L791.1 637.6M804.7 643.3L805.7 645.2L804.3 642.7L803.4 641.3M800.7 640.7L800.9 641.8L800.0 644.0M794.7 642.4L795.2 644.1M806.5 643.5L804.7 643.3L803.6 642.5L802.4 642.2L800.7 640.7L798.7 641.2L797.1 641.4L794.7 642.4M801.1 648.6L802.0 646.1M799.1 647.9L798.8 650.3M796.1 646.9L795.4 644.6L794.7 646.0M806.5 648.7L804.9 648.0L803.2 648.3L801.1 648.6L799.1 647.9L797.9 648.2L796.1 646.9L793.7 647.9" fill="none" stroke="#000" stroke-width="1.5" shape-rendering="crispEdges"/>
<path d="M6.0 704.8L10.5 703.0L13.6 701.6L16.8 700.0L21.0 698.9L24.7 698.9L27.2 698.9L30.4 701.0L28.3 704.0L26.2 707.3L30.4 708.3L35.6 707.3L39.8 706.9L44.0 706.2L47.0 704.0L48.6 707.3L45.0 710.4L45.0 715.7L50.3 715.7L51.3 720.9L50.3 726.0L53.0 725.5L56.5 725.0L59.8 725.9L62.8 726.0L67.0 729.3L71.2 727.2L72.3 730.3L74.3 734.5L72.2 736.8L71.2 739.7L67.0 741.8L66.0 745.0L68.0 747.4L71.2 749.0L74.6 749.5L77.5 751.3L80.8 749.8L82.7 747.0L79.6 744.0L81.7 740.8L85.1 742.0L88.0 742.9L92.0 746.0L95.5 746.3L100.0 748.0L104.0 745.4L108.0 744.0L113.0 741.0L115.6 740.0L118.3 739.6L122.0 739.0L125.9 740.5L130.0 741.0L134.0 739.7L138.0 738.0L141.0 739.2L143.9 739.7L147.0 741.0L148.7 738.7L149.0 735.0L149.8 732.0L149.4 728.0L150.0 725.0L151.2 721.4L153.0 719.0L156.9 717.9L160.0 717.0L164.5 718.3L168.0 720.0L172.6 721.5L176.0 722.0L178.3 719.6L182.0 718.0L184.6 715.6L186.7 713.2L188.0 711.0L189.1 708.5L191.7 705.3L193.0 703.0L194.9 699.8L197.9 697.0L195.4 693.9L191.7 695.1L187.4 692.6L186.2 688.3L183.1 689.0L178.2 687.7L176.3 683.4L179.4 680.3L184.4 679.7L187.5 677.0L189.3 673.6L191.2 670.1L194.2 667.4L198.0 666.8L200.4 665.9L204.0 666.2L209.0 663.7L210.2 660.0L210.9 658.7L214.0 654.7L216.2 651.7L219.2 652.8L221.6 654.4L225.0 655.2L227.3 653.9L230.1 652.0L233.0 650.3L236.9 649.5L239.0 647.5L242.2 647.8L245.6 646.8L250.0 646.9L253.0 646.4L255.9 648.9L260.0 650.0L263.1 650.2L267.4 650.9L270.6 651.7L273.8 651.7L277.1 653.0L281.2 653.5L284.3 651.9L288.2 650.0L291.6 649.3L295.9 648.8L298.8 648.2L302.4 650.5L305.8 651.7L306.3 647.6L308.2 645.0L308.6 641.0L308.4 637.1L309.3 634.6L308.7 631.1L309.3 627.0L312.5 625.1L314.6 622.9L317.5 623.5L320.6 625.3L320.2 629.0L320.7 631.7L321.0 635.0L321.6 637.6L322.9 640.8L323.5 645.0L325.2 648.2L326.9 650.8L329.9 654.6L332.2 657.0L335.3 658.4L338.0 660.5L335.3 660.5L330.7 661.1L327.9 661.2L324.2 662.1L321.4 662.2L318.0 663.2L318.0 664.0L320.9 664.2L325.0 663.5L327.7 663.1L330.1 662.0L333.0 662.9L337.1 662.6L340.0 661.6L344.8 659.6L347.1 658.9L350.7 658.2L353.4 657.7L356.0 656.1L359.6 655.2L363.2 655.1L366.5 654.1L369.9 653.7L372.5 652.7L376.6 652.2L379.3 651.0L382.5 651.0L386.4 650.3L389.3 649.6L392.5 649.5L395.1 649.1L399.0 648.5L403.0 649.0L405.9 648.3L409.2 648.6L412.1 649.0L414.8 648.9L418.7 648.5L421.3 649.1L425.2 649.0L428.8 649.7L432.0 650.8L434.8 649.9L438.4 651.0L441.1 652.1L443.9 652.2L447.8 653.7L450.2 654.9L453.2 655.2L455.9 656.8L458.7 657.8L462.5 659.9L465.6 660.5L468.0 662.0L471.2 663.9L473.6 666.2L477.6 668.9L480.2 670.5L483.0 673.0L484.8 673.8L487.6 675.9L489.7 678.0L492.6 680.0L495.2 682.2L497.2 684.8L500.6 686.5L502.4 688.7L504.3 690.9L507.9 693.8L509.8 697.3L512.5 700.4L514.7 703.4L513.8 708.1L513.5 712.0L517.1 710.8L522.0 710.7L524.4 711.8L527.5 713.8L529.0 715.2L532.2 717.5L534.5 719.3L537.8 718.3L541.1 717.5L544.0 715.2L546.8 714.4L550.1 711.9L552.7 710.2L556.7 708.2L559.5 705.8L561.3 704.1L564.4 702.3L566.7 700.7L569.0 698.4L571.3 697.0L574.5 694.1L577.0 693.2L578.8 691.0L582.0 690.9L586.2 691.0L585.8 687.3L585.0 682.4L586.7 680.0L588.7 677.4L592.9 676.0L596.0 673.7L600.0 673.6L602.9 673.3L606.0 673.7L610.0 674.1L613.3 673.7L615.9 676.5L618.2 678.7L621.5 681.7L625.6 683.6L629.1 685.9L631.4 687.3L634.2 688.5L636.4 691.6L639.6 693.3L641.6 696.0L642.2 698.8L644.1 702.0L645.3 704.5L647.7 705.9L650.7 708.0L652.7 710.7L655.6 712.1L657.6 714.4L657.1 717.9L656.5 720.1L656.7 723.9L656.4 726.7L659.7 729.0L662.8 730.8L665.0 732.8L668.1 734.7L669.5 737.8L672.4 740.2L674.6 743.6L677.3 746.4L679.6 748.9L681.9 751.4L683.5 753.8L682.6 757.2L682.3 761.0L686.6 760.1L690.0 758.0L692.9 758.5L697.3 758.0L700.0 758.0L701.1 761.4L702.1 765.7L703.0 769.5L704.9 771.3L707.2 774.5L708.1 777.4L710.0 779.5L710.6 783.3L711.3 786.6L711.5 791.0L711.9 793.9L712.7 797.6L712.1 800.0L712.2 802.9L713.0 806.0" fill="none" stroke="#000" stroke-width="1.2" shape-rendering="crispEdges"/>
<path d="M260.0 660.5L274.0 662.0M278.0 662.5L284.7 664.0M305.8 662.3L316.3 661.8M318.0 663.0L337.4 660.6L351.5 658.0M249.6 678.5L252.0 681.0L254.0 685.9L254.6 692.0L252.7 699.4L249.6 706.8L244.7 711.7M236.0 722.2L233.6 725.3M228.7 727.8L225.0 730.8M248.4 693.3L244.7 697.0L242.3 701.9M228.7 663.5L235.0 662.5L232.0 665.5M241.0 664.5L246.0 663.7M533.0 720.0L547.0 715.0L558.0 707.5L560.5 704.5M563.0 702.5L570.0 698.5" fill="none" stroke="#000" stroke-width="1.3" stroke-dasharray="5 1.5"/>
<path d="M6.2 105.4L154.7 105.4L155.7 109.6L161.3 114.5L160.1 121.9L156.4 128.1L150.2 133.0L145.3 139.2L141.6 144.1L137.9 149.5L186.5 149.5M201.7 6.2L203.0 12.3L207.9 22.2L207.9 29.6L201.7 33.3L203.0 39.4L209.1 46.8L211.6 53.0L214.0 57.1L220.2 59.1L223.9 55.4L225.1 59.1M305.2 6.2L307.6 12.3L308.9 17.2L297.8 18.5L290.4 23.4L283.0 23.4L279.3 27.1L276.8 34.5L279.3 40.6L283.0 45.6L281.8 50.5L278.1 54.2L273.2 53.0L268.2 49.3L260.8 45.6L253.4 43.1L248.5 40.6L243.6 38.9L237.4 40.6L233.7 45.6L228.8 50.5L225.1 56.7L225.1 60.3M209.1 104.7L264.5 104.7L265.8 105.4L311.3 105.4L310.1 89.2L322.4 89.2L326.1 92.4L350.0 92.4M350.0 92.4L374.6 91.1L419.0 90.6L448.5 92.4L483.0 94.1L522.4 93.1L550.0 94.8M550.0 94.8L572.2 95.6L614.0 96.8L635.0 96.8L668.2 96.1L750.0 96.1M634.6 96.8L642.0 91.6L649.4 89.2L659.3 86.2L676.5 82.5L681.4 75.1L696.2 71.4L697.4 62.8L707.3 55.4L708.5 49.3L718.4 44.3L738.1 34.5L752.9 22.2L761.5 13.5L765.2 12.3L763.9 16.0L767.6 24.6L775.0 32.0L784.9 41.9L794.7 40.6L805.8 34.5M747.9 6.2L752.9 9.9L761.5 12.3L765.2 12.3M740.5 95.6L767.6 94.3L787.3 94.3L805.8 98.0M787.3 94.3L782.4 103.4L781.2 113.3L782.4 119.5L775.0 117.7L767.6 123.2L760.2 137.9L752.9 139.2L745.5 135.5L735.6 137.9L728.2 142.9L722.1 151.5L717.1 152.7L715.9 145.3L712.2 143.3L706.1 146.6L701.1 153.9L693.7 154.7L692.5 161.3L688.8 168.7L681.4 168.7L674.0 172.4L661.7 179.8L654.3 183.5L649.4 188.4L639.6 186.7L628.5 188.4L619.9 192.1L612.5 200.0M142.9 238.7L200.0 238.7M200.0 238.2L299.8 237.7L335.5 237.4L400.0 238.7M299.8 237.7L302.2 243.1L307.1 246.8L305.9 261.6L303.4 285.0L301.0 305.9L298.5 328.1L296.1 347.8L294.1 372.4L292.4 387.2L291.6 400.0M400.0 238.2L444.3 238.7L471.4 238.7L505.9 239.4L537.9 238.9L600.0 238.9M492.4 239.4L497.3 259.1L501.0 283.7L505.9 310.8L510.8 340.4L514.5 367.5L517.7 387.2L519.5 400.0M598.6 239.2L630.6 239.4L659.0 238.9L678.7 238.2M678.7 238.2L689.7 233.3L703.3 230.8L709.4 226.6L719.3 223.4L731.6 220.9L743.9 220.2L763.6 220.9L790.7 222.7L806.0 223.4M678.7 238.2L677.4 243.1L670.0 248.0L663.9 255.4L660.2 264.0L665.1 269.0L673.7 273.9L679.9 280.0L686.0 284.2L694.7 283.7L698.4 292.4L703.3 298.5L705.8 308.4L709.4 314.5L715.6 324.4L719.3 331.8L726.7 336.7L734.1 341.6L741.5 347.8L745.2 355.2L751.3 362.6L758.7 365.0L763.6 372.4L767.3 376.1L766.1 383.5L769.8 388.4L773.5 394.6L778.4 398.3M587.9 239.0L588.8 228.1L590.5 217.6L595.8 214.9L601.9 216.7L609.0 212.3L609.8 207.0L611.6 200.0L612.5 194.7M6.2 415.3L78.8 415.3M44.3 594.6L187.2 594.6M291.6 400.0L288.7 424.6L285.0 456.7L282.5 481.3L280.0 503.4L279.3 518.2L280.8 547.8L281.8 572.4L283.3 600.0M400.0 594.6L345.3 594.6L344.1 597.0L345.3 600.0M519.5 400.0L523.2 419.7L525.6 429.6L530.5 446.8L536.7 459.1L540.4 467.7L537.9 475.1L545.3 480.0L546.6 485.0L537.9 487.4L534.2 494.8L533.0 503.4L534.2 515.8L533.0 528.1L533.0 539.2L534.2 550.2L530.5 570.0L530.5 577.3L535.5 587.2L537.9 594.6L539.2 600.0M400.0 594.6L537.9 594.6M778.4 400.0L782.1 404.9L789.5 408.6L796.9 413.5L798.1 420.9L801.8 427.1L803.8 434.5L806.0 440.6M284.1 606.0L284.8 630.6L285.3 646.6M186.4 594.2L184.3 602.6L179.1 613.0L178.0 623.5L182.2 636.1L188.5 642.4L190.6 652.8L194.8 661.2L196.9 667.5M343.5 600.0L341.1 607.4L347.2 614.8L354.6 620.9L359.6 624.6L358.3 632.0L355.9 635.7L357.1 641.9M546.8 620.0L700.0 629.4M533.3 540.0L529.7 572.4L536.9 594.0L542.3 612.0L547.7 620.0M640.0 625.8L725.8 631.5M726.0 631.6L744.7 631.6L745.7 640.5L747.7 650.3L757.5 651.3L758.5 642.5L760.5 632.6L757.5 622.8L758.5 614.9L764.4 610.0L768.4 610.0L775.3 613.9L785.1 616.8L791.0 618.8M225.1 60.3C227.1 61.1 228.9 60.1 231.3 62.8C233.6 65.5 233.3 66.2 232.5 69.0C231.7 71.7 230.8 69.1 228.8 71.4C226.9 73.8 226.0 74.0 226.4 76.4C226.7 78.7 228.5 77.3 230.0 78.8C231.6 80.4 232.1 79.3 231.3 81.3C230.5 83.2 229.5 82.6 227.6 85.0C225.6 87.3 225.1 86.3 225.1 88.7C225.1 91.0 228.0 89.6 227.6 92.4C227.2 95.1 225.8 95.3 223.9 97.3C221.9 99.2 223.4 99.3 221.4 98.5C219.5 97.7 219.7 96.8 217.7 94.8C215.8 92.9 216.8 92.4 215.3 92.4C213.7 92.4 214.4 92.1 212.8 94.8C211.2 97.6 211.9 97.1 210.3 101.0C208.8 104.9 209.4 104.8 207.9 107.1C206.3 109.5 207.0 109.2 205.4 108.4C203.9 107.6 203.2 107.4 203.0 104.7C202.7 101.9 205.1 102.1 204.7 99.8C204.3 97.4 203.8 97.7 201.7 97.3C199.6 96.9 199.4 97.0 198.0 98.5C196.6 100.1 196.5 100.3 197.3 102.2C198.1 104.2 198.7 103.1 200.5 104.7C202.3 106.2 203.0 105.2 203.0 107.1C203.0 109.1 202.1 108.1 200.5 110.8C198.9 113.6 198.0 112.6 198.0 115.8C198.0 118.9 200.5 117.6 200.5 120.7C200.5 123.8 201.1 123.7 198.0 125.6C194.9 127.6 193.8 125.3 190.6 126.8C187.5 128.4 187.4 128.2 188.2 130.5C189.0 132.9 190.4 132.3 193.1 134.2C195.8 136.2 196.8 134.4 196.8 136.7C196.8 139.0 195.4 138.9 193.1 141.6C190.8 144.4 191.4 142.8 189.4 145.3C187.5 147.8 186.6 146.8 186.9 149.5C187.3 152.2 189.1 151.4 190.6 153.9C192.2 156.5 193.0 155.7 191.9 157.6C190.7 159.6 189.3 158.1 186.9 160.1C184.6 162.0 184.1 161.5 184.5 163.8C184.9 166.1 189.0 165.5 188.2 167.5C187.4 169.4 185.9 168.4 182.0 170.0C178.1 171.5 179.4 171.6 175.9 172.4C172.4 173.2 172.9 170.9 170.9 172.4C169.0 174.0 168.5 174.6 169.7 177.3C170.9 180.1 173.5 178.7 174.6 181.0C175.8 183.4 175.7 182.0 173.4 184.7C171.1 187.5 170.8 187.3 167.2 189.7C163.7 192.0 163.5 190.2 162.3 192.1C161.1 194.1 164.3 194.3 163.5 195.8C162.8 197.4 162.2 195.7 159.9 197.0C157.5 198.4 157.3 199.1 156.2 200.0M161.3 200.0C159.8 201.2 158.7 200.6 156.4 203.7C154.1 206.8 152.8 206.3 153.9 209.9C155.1 213.4 158.9 211.3 160.1 214.8C161.3 218.3 157.2 217.8 157.6 220.9C158.0 224.1 162.5 222.8 161.3 224.6C160.2 226.4 158.2 223.5 153.9 226.6C149.7 229.7 151.3 230.8 147.8 234.5C144.3 238.1 142.9 235.8 142.9 238.2C142.9 240.5 146.6 238.8 147.8 241.9C149.0 245.0 148.9 245.3 146.6 248.0C144.2 250.8 144.3 249.3 140.4 250.5C136.5 251.7 136.6 252.5 134.2 251.7C131.9 250.9 134.2 248.8 133.0 248.0C131.8 247.2 130.9 246.9 130.5 249.3C130.2 251.6 132.6 252.7 131.8 255.4C131.0 258.1 130.0 255.9 128.1 257.9C126.1 259.8 125.2 259.2 125.6 261.6C126.0 263.9 128.9 262.5 129.3 265.3C129.7 268.0 128.8 269.8 126.8 270.2C124.9 270.6 123.9 265.3 123.2 266.5C122.4 267.7 124.8 270.0 124.4 273.9C124.0 277.8 122.3 274.9 121.9 278.8C121.5 282.7 123.2 282.3 123.2 286.2C123.2 290.1 124.3 288.8 121.9 291.1C119.6 293.5 118.5 291.6 115.8 293.6C113.0 295.5 115.3 296.9 113.3 297.3C111.4 297.7 111.2 293.7 109.6 294.8C108.0 296.0 110.3 298.3 108.4 301.0C106.4 303.7 106.2 301.5 103.4 303.4C100.7 305.4 99.8 304.4 99.8 307.1C99.8 309.9 103.8 309.3 103.4 312.1C103.1 314.8 101.3 315.0 98.5 315.8C95.8 316.5 95.2 313.4 94.8 314.5C94.4 315.7 95.3 316.7 97.3 319.5C99.2 322.2 101.0 320.8 101.0 323.2C101.0 325.5 100.0 326.1 97.3 326.8C94.6 327.6 95.1 324.8 92.4 325.6C89.6 326.4 91.0 327.8 88.7 329.3C86.3 330.9 84.6 329.0 85.0 330.5C85.4 332.1 89.5 331.1 89.9 334.2C90.3 337.4 85.8 336.5 86.2 340.4C86.6 344.3 91.5 344.2 91.1 346.6C90.7 348.9 88.1 346.6 85.0 347.8C81.9 349.0 81.3 347.9 81.3 350.2C81.3 352.6 85.8 354.0 85.0 355.2C84.2 356.3 81.9 353.6 78.8 353.9C75.7 354.3 75.1 354.1 75.1 356.4C75.1 358.7 79.2 358.6 78.8 361.3C78.4 364.1 74.7 361.5 73.9 365.0C73.1 368.5 74.0 368.9 76.4 372.4C78.7 375.9 78.2 374.5 81.3 376.1C84.4 377.7 85.4 375.0 86.2 377.3C87.0 379.7 85.7 380.4 83.7 383.5C81.8 386.6 80.0 384.1 80.0 387.2C80.0 390.3 81.8 390.2 83.7 393.3C85.7 396.5 85.8 394.9 86.2 397.0C86.6 399.2 85.4 399.1 85.0 400.0M85.0 400.0C84.2 401.2 84.9 401.7 82.5 403.7C80.2 405.6 78.0 403.8 77.6 406.2C77.2 408.5 79.7 408.0 81.3 411.1C82.8 414.2 84.1 413.3 82.5 416.0C81.0 418.7 77.5 416.6 76.4 419.7C75.2 422.8 76.1 425.1 78.8 425.9C81.5 426.6 83.4 421.0 85.0 422.2C86.5 423.3 85.3 426.0 83.7 429.6C82.2 433.1 80.8 429.7 80.0 433.3C79.3 436.8 79.7 436.7 81.3 440.6C82.8 444.5 85.0 442.4 85.0 445.6C85.0 448.7 80.9 448.2 81.3 450.5C81.7 452.8 83.1 453.3 86.2 453.0C89.3 452.6 90.4 448.1 91.1 449.3C91.9 450.4 90.6 453.1 88.7 456.7C86.7 460.2 85.4 457.6 85.0 460.3C84.6 463.1 84.7 463.3 87.4 465.3C90.2 467.2 90.9 464.6 93.6 466.5C96.3 468.5 94.1 469.5 96.1 471.4C98.0 473.4 99.4 470.7 99.8 472.7C100.1 474.6 99.6 474.9 97.3 477.6C95.0 480.3 93.5 478.6 92.4 481.3C91.2 484.0 95.5 485.0 93.6 486.2C91.6 487.4 90.5 484.6 86.2 485.0C81.9 485.4 82.0 484.7 80.0 487.4C78.1 490.2 78.5 491.3 80.0 493.6C81.6 495.9 81.9 495.2 85.0 494.8C88.1 494.4 88.7 491.2 89.9 492.4C91.1 493.5 90.2 495.4 88.7 498.5C87.1 501.6 86.5 499.5 85.0 502.2C83.4 504.9 85.7 505.6 83.7 507.1C81.8 508.7 81.2 505.6 78.8 507.1C76.5 508.7 78.3 508.9 76.4 512.1C74.4 515.2 75.8 514.7 72.7 517.0C69.5 519.3 68.8 516.7 66.5 519.5C64.2 522.2 63.7 522.9 65.3 525.6C66.8 528.3 69.9 528.9 71.4 528.1C73.0 527.3 71.8 523.9 70.2 523.2C68.6 522.4 68.8 523.3 66.5 525.6C64.2 528.0 64.4 526.6 62.8 530.5C61.2 534.4 63.9 535.6 61.6 537.9C59.2 540.3 57.8 536.4 55.4 537.9C53.1 539.5 52.6 541.7 54.2 542.9C55.7 544.0 58.0 540.1 60.3 541.6C62.7 543.2 62.7 544.7 61.6 547.8C60.4 550.9 59.4 549.5 56.7 551.5C53.9 553.4 53.3 551.2 53.0 553.9C52.6 556.7 55.8 557.4 55.4 560.1C55.0 562.8 54.1 563.0 51.7 562.6C49.4 562.2 48.4 560.8 48.0 558.9C47.6 556.9 48.9 552.9 50.5 556.4C52.1 559.9 54.9 565.5 53.0 570.0C51.0 574.4 45.9 568.5 44.3 570.4C42.8 572.4 48.0 572.8 48.0 576.1C48.0 579.5 43.9 577.9 44.3 581.0C44.7 584.2 48.9 582.8 49.3 586.0C49.7 589.1 47.1 588.2 45.6 590.9C44.0 593.6 44.7 593.4 44.3 594.6" stroke="#000" stroke-width="1.15" fill="none" stroke-linejoin="round" shape-rendering="crispEdges"/>
<path d="M419.50 247.99A159.5 159.5 0 1 1 394.50 247.99" fill="none" stroke="#d4d4d4" stroke-width="1"/>
<path d="M419.50 127.78A279.5 279.5 0 1 1 394.50 127.78" fill="none" stroke="#d4d4d4" stroke-width="1"/>
<path d="M419.50 7.70A399.5 399.5 0 1 1 394.50 7.70" fill="none" stroke="#d4d4d4" stroke-width="1"/>
<circle cx="407" cy="407" r="519.5" fill="none" stroke="#d4d4d4" stroke-width="1"/>
<text x="395" y="11.5" textLength="21" lengthAdjust="spacingAndGlyphs" font-family="Liberation Sans, sans-serif" font-size="11" fill="#ffff90">313</text>
<text x="395" y="131.5" textLength="21" lengthAdjust="spacingAndGlyphs" font-family="Liberation Sans, sans-serif" font-size="11" fill="#ffff90">219</text>
<text x="395" y="251.5" textLength="21" lengthAdjust="spacingAndGlyphs" font-family="Liberation Sans, sans-serif" font-size="11" fill="#ffff90">125</text>
<text x="399.5" y="371.5" textLength="13.0" lengthAdjust="spacingAndGlyphs" font-family="Liberation Sans, sans-serif" font-size="11" fill="#ffff90">31</text>
<circle cx="407" cy="407" r="39.4" fill="none" stroke="#ff0000" stroke-width="1.15"/>
<rect x="8.5" y="759.5" width="244" height="43" fill="#000" stroke="#a8a8a8"/><text x="13.5" y="771.5" textLength="35.5" lengthAdjust="spacingAndGlyphs" font-family="Liberation Sans, sans-serif" font-size="10.5" fill="#e8e8e8">Symbols</text><text x="53" y="771.5" textLength="17" lengthAdjust="spacingAndGlyphs" font-family="Liberation Sans, sans-serif" font-size="10.5" fill="#e8e8e8">-CG</text><text x="77.7" y="771.5" textLength="14.799999999999997" lengthAdjust="spacingAndGlyphs" font-family="Liberation Sans, sans-serif" font-size="10.5" fill="#e8e8e8">-IC</text><text x="98.7" y="771.5" textLength="20.299999999999997" lengthAdjust="spacingAndGlyphs" font-family="Liberation Sans, sans-serif" font-size="10.5" fill="#e8e8e8">+CG</text><text x="124" y="771.5" textLength="17.400000000000006" lengthAdjust="spacingAndGlyphs" font-family="Liberation Sans, sans-serif" font-size="10.5" fill="#e8e8e8">+IC</text><text x="153" y="771.5" textLength="90" lengthAdjust="spacingAndGlyphs" font-family="Liberation Sans, sans-serif" font-size="10.5" fill="#d0d8e8">Strike age color codes</text><text x="13.5" y="784" textLength="27.5" lengthAdjust="spacingAndGlyphs" font-family="Liberation Sans, sans-serif" font-size="10.5" fill="#e8e8e8">Recent</text><text x="13.5" y="796.8" textLength="14.5" lengthAdjust="spacingAndGlyphs" font-family="Liberation Sans, sans-serif" font-size="10.5" fill="#e8e8e8">Old</text><g stroke="#00ffff" fill="none" stroke-width="1.1"><circle cx="60" cy="780.5" r="4"/><path d="M57.5 780.5h5M82 780.5h7M107.5 780.5h6M110.5 777.5v6M132 780.5h7M135.5 777.0v7"/><circle cx="110.5" cy="780.5" r="4"/></g><g stroke="#ffff00" fill="none" stroke-width="1.1"><circle cx="60" cy="793.5" r="4"/><path d="M57.5 793.5h5M82 793.5h7M107.5 793.5h6M110.5 790.5v6M132 793.5h7M135.5 790.0v7"/><circle cx="110.5" cy="793.5" r="4"/></g><text x="153.5" y="784" textLength="16.0" lengthAdjust="spacingAndGlyphs" font-family="Liberation Sans, sans-serif" font-size="10.5" fill="#ffe000">15+</text><text x="188.5" y="784" textLength="16.5" lengthAdjust="spacingAndGlyphs" font-family="Liberation Sans, sans-serif" font-size="10.5" fill="#ffb400">30+</text><text x="223.4" y="784" textLength="16.599999999999994" lengthAdjust="spacingAndGlyphs" font-family="Liberation Sans, sans-serif" font-size="10.5" fill="#ffa000">45+</text><text x="153.5" y="796.8" textLength="16.0" lengthAdjust="spacingAndGlyphs" font-family="Liberation Sans, sans-serif" font-size="10.5" fill="#ff8000">60+</text><text x="188.5" y="796.8" textLength="16.5" lengthAdjust="spacingAndGlyphs" font-family="Liberation Sans, sans-serif" font-size="10.5" fill="#ff6000">75+</text><text x="223.4" y="796.8" textLength="16.599999999999994" lengthAdjust="spacingAndGlyphs" font-family="Liberation Sans, sans-serif" font-size="10.5" fill="#ff3000">90+</text>
<rect x="685" y="792" width="121" height="14" fill="#000"/>
<text x="688.6" y="802" textLength="113.6" lengthAdjust="spacingAndGlyphs" font-family="Liberation Sans, sans-serif" font-size="10" fill="#f0f0f0">©2005 Astrogenic Systems</text>
</g>
<rect x="812.5" y="8.5" width="320" height="319.0" rx="7" ry="7" fill="none" stroke="#bdbdbd" stroke-width="1"/>
<rect x="812.5" y="334.5" width="320" height="113.0" rx="7" ry="7" fill="none" stroke="#bdbdbd" stroke-width="1"/>
<rect x="812.5" y="453.5" width="320" height="349.0" rx="7" ry="7" fill="none" stroke="#bdbdbd" stroke-width="1"/>
<rect x="819.5" y="16.5" width="57" height="17" fill="#520000" stroke="#c8c8c8"/>
<rect x="883.5" y="16.5" width="57" height="17" fill="#333333" stroke="#c8c8c8"/>
<rect x="994.5" y="16.5" width="127" height="17" fill="#333333" stroke="#c8c8c8"/>
<rect x="821.5" y="64.5" width="81" height="15" fill="#585858" stroke="#b4b4b4"/>
<rect x="931.5" y="64.5" width="81" height="15" fill="#585858" stroke="#b4b4b4"/>
<rect x="1041.5" y="64.5" width="81" height="15" fill="#585858" stroke="#b4b4b4"/>
<line x1="821" y1="217.5" x2="1124" y2="217.5" stroke="#a8a8a8"/>
<line x1="821" y1="358.5" x2="1123" y2="358.5" stroke="#a8a8a8"/>
<rect x="926" y="228" width="10.5" height="9" fill="#ff0000"/>
<rect x="925.5" y="227.5" width="50" height="10" rx="2" ry="2" fill="none" stroke="#a0a0a0"/>
<rect x="1029" y="228" width="25.5" height="9" fill="#90ccff"/>
<rect x="1028.5" y="227.5" width="50" height="10" rx="2" ry="2" fill="none" stroke="#a0a0a0"/>
<rect x="926" y="282" width="7.5" height="9" fill="#e864b0"/>
<rect x="925.5" y="281.5" width="50" height="10" rx="2" ry="2" fill="none" stroke="#a0a0a0"/>
<rect x="1029" y="282" width="7.5" height="9" fill="#00ff00"/>
<rect x="1028.5" y="281.5" width="50" height="10" rx="2" ry="2" fill="none" stroke="#a0a0a0"/>
<path d="M913 232.5h8M917 228.5v8" stroke="#d0d0d0" stroke-width="1.2" fill="none"/>
<rect x="1016" y="231.0" width="7" height="2" fill="#c8c8c8"/>
<path d="M913 286.5h8M917 282.5v8" stroke="#d0d0d0" stroke-width="1.2" fill="none"/>
<rect x="1016" y="285.0" width="7" height="2" fill="#c8c8c8"/>
<path d="M1088.5 542V778M822 777.5H1089" stroke="#d0d0d0" fill="none"/>
<path d="M822.5 774.5v5M866.8 774.5v5M911.2 774.5v5M955.5 774.5v5M999.8 774.5v5M1044.2 774.5v5M1088.5 774.5v5M1084.0 777.5h4.5M1085.5 738.3h3M1084.0 699.2h4.5M1085.5 660.0h3M1084.0 620.8h4.5M1085.5 581.6h3M1084.0 542.5h4.5" stroke="#d0d0d0" fill="none"/>
<text x="823.49" y="29.6" textLength="49.28" lengthAdjust="spacingAndGlyphs" font-family="Liberation Serif, serif" font-size="13" font-weight="bold" fill="#e6cccc">STRIKE</text>
<text x="890.49" y="29.6" textLength="43.77" lengthAdjust="spacingAndGlyphs" font-family="Liberation Serif, serif" font-size="13" font-weight="bold" fill="#c4c4c4">NOISE</text>
<text x="997.73" y="29.6" textLength="63.04" lengthAdjust="spacingAndGlyphs" font-family="Liberation Sans, sans-serif" font-size="13" font-weight="bold" fill="#ffffff">Bng 212°</text>
<text x="1075.49" y="29.6" textLength="43.05" lengthAdjust="spacingAndGlyphs" font-family="Liberation Sans, sans-serif" font-size="13" font-weight="bold" fill="#00ff00">354mi</text>
<text x="828.98" y="75.9" textLength="66.78" lengthAdjust="spacingAndGlyphs" font-family="Liberation Sans, sans-serif" font-size="13" font-weight="normal" fill="#e8e8e8">Strikes/min</text>
<text x="942.73" y="75.9" textLength="59.03" lengthAdjust="spacingAndGlyphs" font-family="Liberation Sans, sans-serif" font-size="13" font-weight="normal" fill="#e8e8e8">Close/min</text>
<text x="1049.47" y="75.9" textLength="63.80" lengthAdjust="spacingAndGlyphs" font-family="Liberation Sans, sans-serif" font-size="13" font-weight="normal" fill="#e8e8e8">Noises/min</text>
<text x="882.79" y="111.7" textLength="20.67" lengthAdjust="spacingAndGlyphs" font-family="Liberation Sans, sans-serif" font-size="30" font-weight="bold" fill="#ffffff">0</text>
<text x="993.29" y="111.7" textLength="20.67" lengthAdjust="spacingAndGlyphs" font-family="Liberation Sans, sans-serif" font-size="30" font-weight="bold" fill="#ffffff">0</text>
<text x="1104.74" y="111.7" textLength="16.63" lengthAdjust="spacingAndGlyphs" font-family="Liberation Sans, sans-serif" font-size="30" font-weight="bold" fill="#c0c0c0">1</text>
<text x="826.00" y="142.9" textLength="77.26" lengthAdjust="spacingAndGlyphs" font-family="Liberation Sans, sans-serif" font-size="13" font-weight="normal" fill="#ffffff">Total Strikes</text>
<text x="944.25" y="142.9" textLength="68.76" lengthAdjust="spacingAndGlyphs" font-family="Liberation Sans, sans-serif" font-size="13" font-weight="normal" fill="#ffffff">Total Close</text>
<text x="1047.00" y="142.9" textLength="76.01" lengthAdjust="spacingAndGlyphs" font-family="Liberation Sans, sans-serif" font-size="13" font-weight="normal" fill="#d0d0d0">Total Noises</text>
<text x="887.23" y="160.8" textLength="15.81" lengthAdjust="spacingAndGlyphs" font-family="Liberation Sans, sans-serif" font-size="12.5" font-weight="normal" fill="#e8e8e8">41</text>
<text x="1004.92" y="160.8" textLength="8.17" lengthAdjust="spacingAndGlyphs" font-family="Liberation Sans, sans-serif" font-size="12.5" font-weight="normal" fill="#e8e8e8">0</text>
<text x="1107.19" y="160.8" textLength="16.12" lengthAdjust="spacingAndGlyphs" font-family="Liberation Sans, sans-serif" font-size="12.5" font-weight="normal" fill="#e8e8e8">65</text>
<text x="819.74" y="214.6" textLength="166.78" lengthAdjust="spacingAndGlyphs" font-family="Liberation Sans, sans-serif" font-size="13" font-weight="normal" fill="#c8c8c8">Lightning type distribution</text>
<text x="820.49" y="236.7" textLength="85.77" lengthAdjust="spacingAndGlyphs" font-family="Liberation Sans, sans-serif" font-size="13" font-weight="bold" fill="#ffffff">Cloud-ground</text>
<text x="820.49" y="260.1" textLength="38.51" lengthAdjust="spacingAndGlyphs" font-family="Liberation Sans, sans-serif" font-size="13" font-weight="bold" fill="#c8c8c8">Count</text>
<text x="979.23" y="236.7" textLength="29.78" lengthAdjust="spacingAndGlyphs" font-family="Liberation Sans, sans-serif" font-size="13" font-weight="bold" fill="#ffffff">20%</text>
<text x="1081.74" y="236.7" textLength="30.28" lengthAdjust="spacingAndGlyphs" font-family="Liberation Sans, sans-serif" font-size="13" font-weight="bold" fill="#ffffff">51%</text>
<text x="924.94" y="260.1" textLength="8.61" lengthAdjust="spacingAndGlyphs" font-family="Liberation Sans, sans-serif" font-size="13" font-weight="bold" fill="#ffffff">8</text>
<text x="1027.96" y="260.1" textLength="15.56" lengthAdjust="spacingAndGlyphs" font-family="Liberation Sans, sans-serif" font-size="13" font-weight="bold" fill="#ffffff">21</text>
<text x="820.23" y="290.4" textLength="65.04" lengthAdjust="spacingAndGlyphs" font-family="Liberation Sans, sans-serif" font-size="13" font-weight="bold" fill="#ffffff">Intracloud</text>
<text x="820.49" y="313.9" textLength="38.51" lengthAdjust="spacingAndGlyphs" font-family="Liberation Sans, sans-serif" font-size="13" font-weight="bold" fill="#c8c8c8">Count</text>
<text x="979.72" y="290.4" textLength="29.30" lengthAdjust="spacingAndGlyphs" font-family="Liberation Sans, sans-serif" font-size="13" font-weight="bold" fill="#ffffff">15%</text>
<text x="1082.22" y="290.4" textLength="29.80" lengthAdjust="spacingAndGlyphs" font-family="Liberation Sans, sans-serif" font-size="13" font-weight="bold" fill="#ffffff">15%</text>
<text x="924.68" y="313.9" textLength="8.90" lengthAdjust="spacingAndGlyphs" font-family="Liberation Sans, sans-serif" font-size="13" font-weight="bold" fill="#ffffff">6</text>
<text x="1027.92" y="313.9" textLength="8.65" lengthAdjust="spacingAndGlyphs" font-family="Liberation Sans, sans-serif" font-size="13" font-weight="bold" fill="#ffffff">6</text>
<text x="820.74" y="352.6" textLength="203.77" lengthAdjust="spacingAndGlyphs" font-family="Liberation Sans, sans-serif" font-size="16" font-weight="bold" fill="#00ff00">2/24/2026 1:35:02 PM</text>
<text x="820.98" y="387.8" textLength="49.79" lengthAdjust="spacingAndGlyphs" font-family="Liberation Sans, sans-serif" font-size="13" font-weight="normal" fill="#ffffff">Squelch</text>
<text x="909.44" y="387.8" textLength="7.63" lengthAdjust="spacingAndGlyphs" font-family="Liberation Sans, sans-serif" font-size="13" font-weight="normal" fill="#ffffff">0</text>
<text x="820.48" y="407.6" textLength="74.04" lengthAdjust="spacingAndGlyphs" font-family="Liberation Sans, sans-serif" font-size="13" font-weight="normal" fill="#ffffff">Persistence</text>
<text x="908.98" y="407.6" textLength="42.80" lengthAdjust="spacingAndGlyphs" font-family="Liberation Sans, sans-serif" font-size="13" font-weight="normal" fill="#ffffff">90 min</text>
<text x="820.46" y="427.6" textLength="41.06" lengthAdjust="spacingAndGlyphs" font-family="Liberation Sans, sans-serif" font-size="13" font-weight="normal" fill="#ffffff">Range</text>
<text x="909.23" y="427.6" textLength="42.55" lengthAdjust="spacingAndGlyphs" font-family="Liberation Sans, sans-serif" font-size="13" font-weight="normal" fill="#ffffff">313 mi</text>
<text x="980.20" y="387.8" textLength="45.34" lengthAdjust="spacingAndGlyphs" font-family="Liberation Sans, sans-serif" font-size="13" font-weight="normal" fill="#ffffff">Upload</text>
<text x="1060.45" y="387.8" textLength="55.08" lengthAdjust="spacingAndGlyphs" font-family="Liberation Sans, sans-serif" font-size="13" font-weight="normal" fill="#c8c8c8">Disabled</text>
<text x="980.23" y="407.6" textLength="52.29" lengthAdjust="spacingAndGlyphs" font-family="Liberation Sans, sans-serif" font-size="13" font-weight="normal" fill="#ffffff">Capture</text>
<text x="1061.25" y="407.6" textLength="36.51" lengthAdjust="spacingAndGlyphs" font-family="Liberation Sans, sans-serif" font-size="13" font-weight="normal" fill="#00f400">Active</text>
<text x="980.23" y="427.6" textLength="53.53" lengthAdjust="spacingAndGlyphs" font-family="Liberation Sans, sans-serif" font-size="13" font-weight="normal" fill="#ffffff">Receiver</text>
<text x="1060.45" y="427.6" textLength="52.08" lengthAdjust="spacingAndGlyphs" font-family="Liberation Sans, sans-serif" font-size="13" font-weight="normal" fill="#00f400">Enabled</text>
<text x="820.21" y="475.2" textLength="44.56" lengthAdjust="spacingAndGlyphs" font-family="Liberation Sans, sans-serif" font-size="13" font-weight="normal" fill="#c8c8c8">Uptime</text>
<text x="909.22" y="475.2" textLength="53.05" lengthAdjust="spacingAndGlyphs" font-family="Liberation Sans, sans-serif" font-size="13" font-weight="normal" fill="#ffffff">1033:20</text>
<text x="980.22" y="475.2" textLength="62.79" lengthAdjust="spacingAndGlyphs" font-family="Liberation Sans, sans-serif" font-size="13" font-weight="normal" fill="#c8c8c8">Peak time</text>
<text x="1060.45" y="475.2" textLength="24.55" lengthAdjust="spacingAndGlyphs" font-family="Liberation Sans, sans-serif" font-size="13" font-weight="normal" fill="#c8c8c8">Plot</text>
<text x="820.47" y="498.3" textLength="61.55" lengthAdjust="spacingAndGlyphs" font-family="Liberation Sans, sans-serif" font-size="13" font-weight="normal" fill="#c8c8c8">Peak rate</text>
<text x="909.47" y="498.3" textLength="34.82" lengthAdjust="spacingAndGlyphs" font-family="Liberation Sans, sans-serif" font-size="13" font-weight="normal" fill="#ffffff">2/min</text>
<text x="980.48" y="498.3" textLength="52.56" lengthAdjust="spacingAndGlyphs" font-family="Liberation Sans, sans-serif" font-size="13" font-weight="normal" fill="#ffffff">6:24 AM</text>
<text x="1060.73" y="498.3" textLength="36.04" lengthAdjust="spacingAndGlyphs" font-family="Liberation Sans, sans-serif" font-size="13" font-weight="normal" fill="#ffffff">Strike</text>
<text x="822.00" y="527.9" textLength="77.02" lengthAdjust="spacingAndGlyphs" font-family="Liberation Sans, sans-serif" font-size="13" font-weight="normal" fill="#c8c8c8">Trend graph</text>
<text x="908.22" y="527.9" textLength="42.06" lengthAdjust="spacingAndGlyphs" font-family="Liberation Sans, sans-serif" font-size="13" font-weight="normal" fill="#ffffff">60 min</text>
<text x="1091.46" y="546.8" textLength="14.56" lengthAdjust="spacingAndGlyphs" font-family="Liberation Sans, sans-serif" font-size="12" font-weight="normal" fill="#d8d8d8">30</text>
<text x="1091.46" y="624.8" textLength="14.56" lengthAdjust="spacingAndGlyphs" font-family="Liberation Sans, sans-serif" font-size="12" font-weight="normal" fill="#d8d8d8">20</text>
<text x="1092.17" y="703.1" textLength="13.86" lengthAdjust="spacingAndGlyphs" font-family="Liberation Sans, sans-serif" font-size="12" font-weight="normal" fill="#d8d8d8">10</text>
<text x="819.71" y="792.7" textLength="14.32" lengthAdjust="spacingAndGlyphs" font-family="Liberation Sans, sans-serif" font-size="12" font-weight="normal" fill="#d8d8d8">60</text>
<text x="863.71" y="792.7" textLength="14.33" lengthAdjust="spacingAndGlyphs" font-family="Liberation Sans, sans-serif" font-size="12" font-weight="normal" fill="#d8d8d8">50</text>
<text x="908.99" y="792.7" textLength="13.53" lengthAdjust="spacingAndGlyphs" font-family="Liberation Sans, sans-serif" font-size="12" font-weight="normal" fill="#d8d8d8">40</text>
<text x="952.46" y="792.7" textLength="14.08" lengthAdjust="spacingAndGlyphs" font-family="Liberation Sans, sans-serif" font-size="12" font-weight="normal" fill="#d8d8d8">30</text>
<text x="996.46" y="792.7" textLength="14.58" lengthAdjust="spacingAndGlyphs" font-family="Liberation Sans, sans-serif" font-size="12" font-weight="normal" fill="#d8d8d8">20</text>
<text x="1041.67" y="792.7" textLength="13.86" lengthAdjust="spacingAndGlyphs" font-family="Liberation Sans, sans-serif" font-size="12" font-weight="normal" fill="#d8d8d8">10</text>
<text x="1087.44" y="792.7" textLength="8.13" lengthAdjust="spacingAndGlyphs" font-family="Liberation Sans, sans-serif" font-size="12" font-weight="normal" fill="#d8d8d8">0</text>
<text x="1099.70" y="792.7" textLength="18.85" lengthAdjust="spacingAndGlyphs" font-family="Liberation Sans, sans-serif" font-size="12" font-weight="normal" fill="#d8d8d8">min</text>
</svg></body></html>
